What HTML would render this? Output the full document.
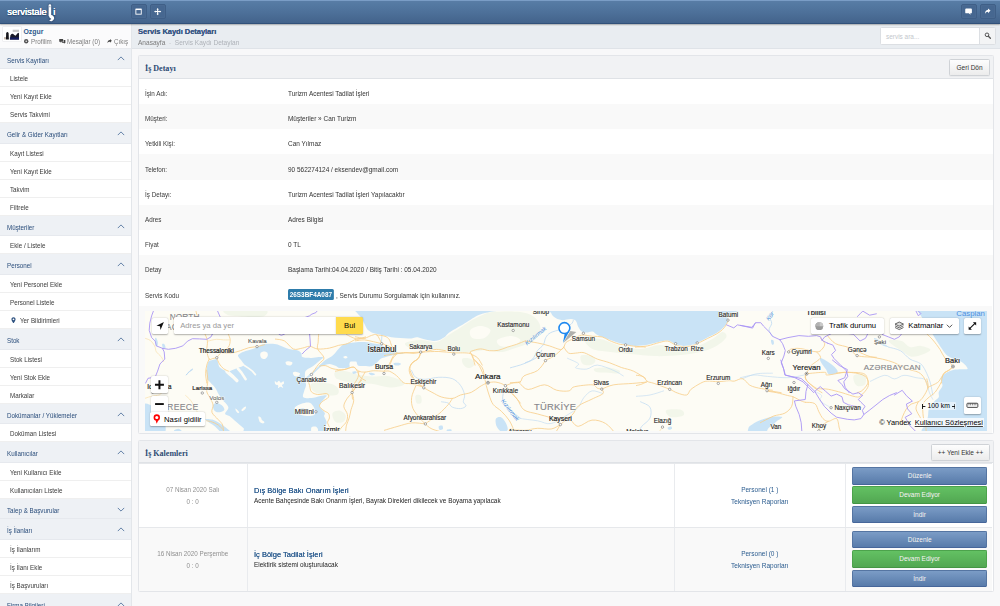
<!DOCTYPE html>
<html lang="tr">
<head>
<meta charset="utf-8">
<title>Servis Kaydı Detayları</title>
<style>
*{box-sizing:border-box;margin:0;padding:0}
html,body{width:1000px;height:606px;overflow:hidden;background:#f8f8f9;font-family:"Liberation Sans",Arial,sans-serif;color:#333;-webkit-text-size-adjust:none}
#app{position:relative;width:1000px;height:606px;overflow:hidden}
/* top bar */
#top{position:absolute;left:0;top:0;width:1000px;height:24px;z-index:5;box-shadow:0 .5px 1.2px rgba(0,0,0,.28);background:linear-gradient(#7a9dc6 0,#7a9dc6 1px,#587ca5 1.5px,#557aa3 15%,#4d7099 55%,#43638b 100%);border-bottom:1px solid #31517a}
#logo{position:absolute;left:7.3px;top:6.2px;font-size:9.45px;line-height:11px;color:#fff;white-space:nowrap;letter-spacing:-.05px;text-shadow:0 0 .5px #fff,0 0 .3px #fff,0 .5px 1.5px rgba(25,45,80,.9)}
.tb{position:absolute;top:3.5px;width:15.5px;height:15.5px;border-radius:2px;background:#466790;border:1px solid #3f5f87;box-shadow:inset 0 0 0 .5px rgba(255,255,255,.05)}
.tb svg{position:absolute;left:0;top:0;width:100%;height:100%}
/* sidebar */
#side{position:absolute;left:0;top:24px;width:131.5px;height:582px;background:#fff;border-right:1px solid #e3e6ea;overflow:hidden}
#user{height:24.6px;position:relative;background:#fbfbfc;border-bottom:1px solid #e8eaee}
#user .av{position:absolute;left:3px;top:3.2px;width:17.6px;height:14.2px;background:#fff;box-shadow:0 0 0 .5px #e4e4e6}
#user .nm{position:absolute;left:23.5px;top:3.8px;font-size:6.9px;font-weight:bold;color:#2f5b8d;line-height:8px}
#user .ln{position:absolute;top:13.6px;font-size:6.9px;line-height:8px;color:#7c7c7c;white-space:nowrap}
#user .ln span{display:inline-block;transform:scaleX(.906);transform-origin:0 50%}
.mh{height:20.5px;background:#eef1f5;border-bottom:1px solid #e6e9ee;position:relative;font-size:6.25px;color:#294c7a;padding-left:6.7px;line-height:23.4px;white-space:nowrap;overflow:hidden}
.mh .chev{position:absolute;right:5.5px;top:7.9px;width:8px;height:5px;fill:none;stroke:#6482a8;stroke-width:1.25}
.mi{height:18.05px;background:#fff;border-bottom:1px solid #efefef;font-size:6.25px;color:#3a3a3a;padding-left:9.7px;line-height:19.8px;overflow:hidden;white-space:nowrap;position:relative}
.mh span,.mi span{display:inline-block;font-size:6.9px;transform:scaleX(.906);transform-origin:0 50%}
.mi .pin{width:5px;height:6.6px;fill:#2b4f7e;vertical-align:-0.2px;margin-left:1.6px}
/* title bar */
#tbar{position:absolute;left:132px;top:24px;width:868px;height:25px;background:#e9edf1;border-bottom:1px solid #dfe3e8}
#tbar h1{position:absolute;left:6px;top:3px;font-size:7.55px;line-height:9px;font-weight:bold;color:#3a5986;white-space:nowrap;letter-spacing:-0.05px;text-shadow:0 0 .35px #3a5986}
#crumb{position:absolute;left:6px;top:15.2px;font-size:7px;line-height:8px;color:#7b7b7b;white-space:nowrap;transform:scaleX(.936);transform-origin:0 50%}
#crumb i{font-style:normal;color:#aeb2b8}
#crumb u{text-decoration:none;color:#c5c8cd}
#search{position:absolute;left:748.4px;top:3.3px;width:115.6px;height:18px;background:#fff;border:1px solid #dcdfe3;border-radius:1.5px}
#search .ph{position:absolute;left:4.6px;top:4.4px;font-size:6.45px;line-height:7px;color:#c3c7cc}
#search .bt{position:absolute;right:0;top:0;width:16px;height:16px;background:#f3f4f5;border-left:1px solid #dcdfe3}
/* panels */
.panel{position:absolute;left:138.45px;width:855.4px;background:#fff;border:1px solid #e3e5e9;border-radius:1.5px}
.ph1{height:22.3px;background:#f1f2f4;border-bottom:1px solid #dfe2e6;position:relative}
.ph1 b{position:absolute;left:5.6px;top:7.8px;font-family:"Liberation Serif","DejaVu Serif",serif;font-size:8.05px;line-height:9px;color:#2c4a73;font-weight:bold;white-space:nowrap}
.btn{position:absolute;background:linear-gradient(#fdfdfd,#ececec);border:1px solid #cfd2d6;border-radius:1.5px;font-size:6.5px;color:#333;text-align:center;white-space:nowrap;box-shadow:0 .5px .5px rgba(0,0,0,.06)}
.row{height:25.22px;position:relative;background:#fff;font-size:6.47px;color:#333;white-space:nowrap}
.row.alt{background:#f9f9f9}
.row .l{position:absolute;left:5.7px;top:2.2px;line-height:25.9px;font-size:6.8px;color:#3a3a3a;transform:scaleX(.927);transform-origin:0 50%}
.row .v{position:absolute;left:148.6px;top:2.2px;line-height:25.9px;font-size:6.9px;transform:scaleX(.936);transform-origin:0 50%}
.code{display:inline-block;background:#2e7cab;color:#fff;font-weight:bold;font-size:6.85px;line-height:11.6px;height:10.7px;padding:0 2.2px;border-radius:1.5px;vertical-align:0.4px;margin-left:-0.4px}
#mapwrap{position:absolute;left:5.15px;top:254.5px;width:842.6px;height:120.5px;overflow:hidden;background:#fdfcf5}
#mapwrap>svg{position:absolute;left:0;top:0}
.mc>svg{display:block}
.mc{position:absolute;background:#fff;border-radius:1.6px;box-shadow:0 .5px 1.5px rgba(0,0,0,.3);font-size:6.1px;color:#000;white-space:nowrap}
/* items */
.it{position:absolute;left:0;width:852.9px;height:63.9px;border-top:1px solid #e6e8eb;background:#fff}
.it.alt{background:#f9f9f9}
.it .c1{position:absolute;left:0;top:0;width:108.5px;height:100%;border-right:1px solid #e9ebee;text-align:center;font-size:6.8px;color:#909090}
.it .c1 div{transform:scaleX(.926)}
.it .c3 div{transform:scaleX(.93)}
.it .c2{position:absolute;left:108.5px;top:0;width:427px;height:100%;border-right:1px solid #e9ebee}
.it .c3{position:absolute;left:535.5px;top:0;width:170.6px;height:100%;border-right:1px solid #e9ebee;text-align:center;font-size:7px;color:#2b5c8f}
.it .tt{position:absolute;left:6.2px;top:21.7px;transform:scaleX(.9375);transform-origin:0 50%;font-size:8px;line-height:9px;color:#2b5c8f;white-space:nowrap;text-shadow:0 0 .2px #2b5c8f}
.it .ds{position:absolute;left:6.2px;top:32.8px;transform:scaleX(.932);transform-origin:0 50%;font-size:6.9px;line-height:8px;color:#222;white-space:nowrap}
.ab{position:absolute;left:712.5px;width:135.4px;height:17.6px;border-radius:1.5px;color:#fff;font-size:6.5px;line-height:16.6px;text-align:center;text-shadow:0 -.5px 0 rgba(0,0,0,.25)}
.ab.b{background:linear-gradient(#7b9cc6,#587baa);border:1px solid #5575a2;border-bottom-color:#46669a}
.ab.g{background:linear-gradient(#63c163,#52a752);border:1px solid #4ca34c;border-bottom-color:#449544}
</style>
</head>
<body>
<div id="app">
 <div id="top">
  <div id="logo">servistale<span style="display:inline-block;width:6.6px"></span>i</div>
  <svg style="position:absolute;left:46px;top:3px;width:10px;height:19px;overflow:visible;filter:drop-shadow(0 .5px .8px rgba(25,45,80,.9))" viewBox="0 0 10 19"><rect x="2.6" y="1.3" width="2.6" height="12.5" rx="1.3" fill="#fff"/><circle cx="3.9" cy="3.7" r=".6" fill="#7d96b8"/><path d="M3.9 12.2 a3 3 0 1 1 -1.2 5.2 l2.1 -1.3 l-2.3 -2 z" fill="#fff" transform="translate(.5 0)"/></svg>
  <div class="tb" style="left:131.3px"><svg viewBox="0 0 15 15"><rect x="4.3" y="4.6" width="6" height="5.6" fill="none" stroke="#fff" stroke-width="1"/><rect x="4.3" y="4.2" width="6" height="1.4" fill="#fff"/></svg></div>
  <div class="tb" style="left:150px"><svg viewBox="0 0 15 15"><path d="M7.4 4.4V10.2M4.5 7.3H10.3" stroke="#fff" stroke-width="1.2" fill="none"/><path d="M7.4 3.3 8.7 5H6.1zM7.4 11.3 8.7 9.6H6.1zM3.4 7.3 5.1 6V8.6zM11.4 7.3 9.7 6V8.6z" fill="#fff"/></svg></div>
  <div class="tb" style="left:961.3px"><svg viewBox="0 0 15 15"><path d="M3.6 4h6.4a1 1 0 0 1 1 1v3.2a1 1 0 0 1-1 1H9.2l.3 1.6-2-1.6H4.6a1 1 0 0 1-1-1V5a1 1 0 0 1 1-1z" fill="#fff"/></svg></div>
  <div class="tb" style="left:980px"><svg viewBox="0 0 15 15"><path d="M10.6 6.2 7.8 3.8v1.5C5.4 5.5 4.4 7.2 4.6 10c.6-1.6 1.5-2.4 3.2-2.4v1.5z" fill="#fff"/></svg></div>
 </div>

 <div id="side">
  <div id="user">
   <div class="av"><svg viewBox="3 27.2 17.6 14.2" width="17.6" height="14.2" style="display:block"><rect x="4" y="28.2" width="15.4" height="11.8" fill="#fff"/><rect x="12.7" y="29.9" width="6.3" height="2.2" fill="#c9c9c9"/><path d="M6.2 33.2 Q7.4 31 8.6 33.2 L8.9 39.6 H5.9z" fill="#15151a"/><path d="M9.9 39.8 L10.4 35.5 Q12.5 32.8 14 35 L15.5 36 L17.6 33.4 Q18.6 32.6 19 33.8 L19 39.8z" fill="#1a1a28"/><rect x="9.9" y="37.6" width="9.1" height="2.2" fill="#151c5e"/><rect x="4.2" y="37.3" width="1.6" height="2.3" fill="#b9a89a"/></svg></div>
   <div class="nm">Ozgur</div>
   <svg style="position:absolute;left:24.4px;top:15.4px" width="4.4" height="4.4" viewBox="0 0 8 8"><circle cx="4" cy="4" r="4" fill="#555"/><circle cx="4" cy="4" r="1.3" fill="#fbfbfc"/></svg>
   <div class="ln" style="left:31.4px"><span>Profilim</span></div>
   <svg style="position:absolute;left:59px;top:15.2px" width="6.6" height="5" viewBox="0 0 11 9"><path d="M0 0h7v5H3.5L2 6.6V5H0z M8 2h3v5H9.6v1.6L8 7H4.6V6H8z" fill="#444"/></svg>
   <div class="ln" style="left:67px"><span>Mesajlar (0)</span></div>
   <svg style="position:absolute;left:107px;top:15px" width="4.8" height="5" viewBox="0 0 9 9"><path d="M9 3 5.6 0v1.9C2.3 2 .6 4.2 1 8c.8-2.2 2.2-3 4.6-3v1.9z" fill="#444"/></svg>
   <div class="ln" style="left:113.8px"><span>Çıkış</span></div>
  </div>
<div class="mh"><span>Servis Kayıtları</span><svg class="chev" viewBox="0 0 10 6"><path d="M1 5 L5 1 L9 5" /></svg></div>
<div class="mi"><span>Listele</span></div>
<div class="mi"><span>Yeni Kayıt Ekle</span></div>
<div class="mi"><span>Servis Takvimi</span></div>
<div class="mh"><span>Gelir & Gider Kayıtları</span><svg class="chev" viewBox="0 0 10 6"><path d="M1 5 L5 1 L9 5" /></svg></div>
<div class="mi"><span>Kayıt Listesi</span></div>
<div class="mi"><span>Yeni Kayıt Ekle</span></div>
<div class="mi"><span>Takvim</span></div>
<div class="mi"><span>Filtrele</span></div>
<div class="mh"><span>Müşteriler</span><svg class="chev" viewBox="0 0 10 6"><path d="M1 5 L5 1 L9 5" /></svg></div>
<div class="mi"><span>Ekle / Listele</span></div>
<div class="mh"><span>Personel</span><svg class="chev" viewBox="0 0 10 6"><path d="M1 5 L5 1 L9 5" /></svg></div>
<div class="mi"><span>Yeni Personel Ekle</span></div>
<div class="mi"><span>Personel Listele</span></div>
<div class="mi"><svg class="pin" viewBox="0 0 10 14"><path d="M5 0.5C2.5 0.5 0.6 2.4 0.6 4.8 0.6 8 5 13.5 5 13.5S9.4 8 9.4 4.8C9.4 2.4 7.5 0.5 5 0.5Z M5 3a1.9 1.9 0 1 1 0 3.8A1.9 1.9 0 0 1 5 3Z" fill-rule="evenodd"/></svg><span style="margin-left:3.5px">Yer Bildirimleri</span></div>
<div class="mh"><span>Stok</span><svg class="chev" viewBox="0 0 10 6"><path d="M1 5 L5 1 L9 5" /></svg></div>
<div class="mi"><span>Stok Listesi</span></div>
<div class="mi"><span>Yeni Stok Ekle</span></div>
<div class="mi"><span>Markalar</span></div>
<div class="mh"><span>Dokümanlar / Yüklemeler</span><svg class="chev" viewBox="0 0 10 6"><path d="M1 5 L5 1 L9 5" /></svg></div>
<div class="mi"><span>Doküman Listesi</span></div>
<div class="mh"><span>Kullanıcılar</span><svg class="chev" viewBox="0 0 10 6"><path d="M1 5 L5 1 L9 5" /></svg></div>
<div class="mi"><span>Yeni Kullanıcı Ekle</span></div>
<div class="mi"><span>Kullanıcıları Listele</span></div>
<div class="mh"><span>Talep & Başvurular</span><svg class="chev" viewBox="0 0 10 6"><path d="M1 1 L5 5 L9 1" /></svg></div>
<div class="mh"><span>İş İlanları</span><svg class="chev" viewBox="0 0 10 6"><path d="M1 5 L5 1 L9 5" /></svg></div>
<div class="mi"><span>İş İlanlarım</span></div>
<div class="mi"><span>İş İlanı Ekle</span></div>
<div class="mi"><span>İş Başvuruları</span></div>
<div class="mh"><span>Firma Bilgileri</span><svg class="chev" viewBox="0 0 10 6"><path d="M1 5 L5 1 L9 5" /></svg></div>
 </div>

 <div id="tbar">
  <h1>Servis Kaydı Detayları</h1>
  <div id="crumb">Anasayfa <u>&nbsp;-&nbsp;</u> <i>Servis Kaydı Detayları</i></div>
  <div id="search"><div class="ph">servis ara...</div><div class="bt"><svg viewBox="0 0 16 16" width="16" height="16"><circle cx="7" cy="6.8" r="1.8" fill="none" stroke="#555" stroke-width="1"/><path d="M8.4 8.2 10.4 10.3" stroke="#555" stroke-width="1.3" stroke-linecap="round"/></svg></div></div>
 </div>

 <div class="panel" style="top:55.4px;height:378.5px">
  <div class="ph1"><b>İş Detayı</b><div class="btn" style="left:809.9px;top:2.7px;width:40.5px;height:16.6px;line-height:15px">Geri Dön</div></div>
<div class="row"><div class="l">İşin Adı:</div><div class="v">Turizm Acentesi Tadilat İşleri</div></div>
<div class="row alt"><div class="l">Müşteri:</div><div class="v">Müşteriler » Can Turizm</div></div>
<div class="row"><div class="l">Yetkili Kişi:</div><div class="v">Can Yılmaz</div></div>
<div class="row alt"><div class="l">Telefon:</div><div class="v">90 562274124 / eksendev@gmail.com</div></div>
<div class="row"><div class="l">İş Detayı:</div><div class="v">Turizm Acentesi Tadilat İşleri Yapılacaktır</div></div>
<div class="row alt"><div class="l">Adres</div><div class="v">Adres Bilgisi</div></div>
<div class="row"><div class="l">Fiyat</div><div class="v">0 TL</div></div>
<div class="row alt"><div class="l">Detay</div><div class="v">Başlama Tarihi:04.04.2020 / Bitiş Tarihi : 05.04.2020</div></div>
<div class="row"><div class="l">Servis Kodu</div><div class="v"><span class="code">26S3BF4A087</span> , Servis Durumu Sorgulamak için kullanınız.</div></div>
  
  <div style="position:absolute;left:0;top:249.3px;width:852.9px;height:127.2px;background:#f9f9f9"></div>
  <div id="mapwrap">
<svg width="842.6" height="120.5" viewBox="144.6 310.9 842.6 120.5" font-family="Liberation Sans, Arial, sans-serif">
<rect x="144" y="310" width="845" height="123" fill="#fdfcf5"/>
<path d="M225.6 309.8 C231.8 309.0 257.6 308.8 264.0 309.8 C270.4 310.8 266.0 314.6 264.0 315.8 C262.0 317.0 256.8 316.8 252.0 316.8 C247.2 316.8 239.4 316.2 235.2 315.8 C231.0 315.4 228.4 315.6 226.8 314.6 C225.2 313.6 219.4 310.6 225.6 309.8Z" fill="#f2f6ea"/>
<path d="M405 343 C406.7 341.7 414.8 340.2 420 340 C425.2 339.8 431.3 342.8 436 342 C440.7 341.2 444.3 337.2 448 335 C451.7 332.8 454.3 331.3 458 329 C461.7 326.7 466.0 323.3 470 321 C474.0 318.7 478.3 316.5 482 315 C485.7 313.5 485.7 312.5 492 312 C498.3 311.5 512.8 311.0 520 312 C527.2 313.0 531.7 315.0 535 318 C538.3 321.0 540.8 326.0 540 330 C539.2 334.0 534.2 339.0 530 342 C525.8 345.0 520.0 346.3 515 348 C510.0 349.7 504.8 351.7 500 352 C495.2 352.3 491.0 350.0 486 350 C481.0 350.0 475.0 351.7 470 352 C465.0 352.3 461.0 352.3 456 352 C451.0 351.7 445.2 350.5 440 350 C434.8 349.5 430.0 349.3 425 349 C420.0 348.7 413.3 349.0 410 348 C406.7 347.0 403.3 344.3 405 343Z" fill="#f2f6ea"/>
<path d="M470 330 C471.3 328.0 476.7 326.0 480 326 C483.3 326.0 489.3 328.0 490 330 C490.7 332.0 487.0 336.7 484 338 C481.0 339.3 474.3 339.3 472 338 C469.7 336.7 468.7 332.0 470 330Z" fill="#fdfcf5"/>
<path d="M497 340 C498.7 338.3 506.2 336.0 510 336 C513.8 336.0 519.7 338.3 520 340 C520.3 341.7 515.3 345.0 512 346 C508.7 347.0 502.5 347.0 500 346 C497.5 345.0 495.3 341.7 497 340Z" fill="#fdfcf5"/>
<path d="M585 340 C587.0 338.8 594.2 338.0 600 339 C605.8 340.0 613.3 344.3 620 346 C626.7 347.7 633.3 349.2 640 349 C646.7 348.8 653.3 345.0 660 345 C666.7 345.0 673.8 348.8 680 349 C686.2 349.2 691.7 347.7 697 346 C702.3 344.3 707.8 341.3 712 339 C716.2 336.7 719.7 332.3 722 332 C724.3 331.7 727.0 334.7 726 337 C725.0 339.3 720.3 343.5 716 346 C711.7 348.5 706.0 350.5 700 352 C694.0 353.5 687.5 354.3 680 355 C672.5 355.7 663.3 356.2 655 356 C646.7 355.8 637.5 354.7 630 354 C622.5 353.3 615.8 352.7 610 352 C604.2 351.3 598.7 351.0 595 350 C591.3 349.0 589.7 347.7 588 346 C586.3 344.3 583.0 341.2 585 340Z" fill="#f2f6ea"/>
<path d="M580.7 355.4 C582.3 354.1 589.2 355.2 591.6 356.1 C594.0 357.0 595.2 359.4 595.0 360.9 C594.8 362.4 592.4 364.6 590.2 365.0 C588.1 365.4 583.7 365.2 582.1 363.6 C580.5 362.0 579.1 356.6 580.7 355.4Z" fill="#f2f6ea"/>
<path d="M594.3 368.4 C596.3 367.7 603.8 367.1 607.9 367.4 C612.0 367.7 617.2 369.4 618.8 370.4 C620.4 371.4 619.7 373.1 617.4 373.4 C615.1 373.7 608.8 372.7 605.2 372.4 C601.6 372.1 597.5 372.5 595.7 371.8 C593.9 371.1 592.3 369.1 594.3 368.4Z" fill="#f2f6ea"/>
<path d="M311.0 383.6 C312.6 382.4 318.2 382.6 321.8 382.7 C325.4 382.8 329.9 383.4 332.6 384.5 C335.3 385.6 337.2 387.4 338.0 389.0 C338.8 390.6 338.6 393.3 337.1 394.4 C335.6 395.4 332.1 395.4 329.0 395.3 C325.9 395.2 321.1 394.4 318.2 393.5 C315.3 392.6 313.1 391.5 311.9 389.9 C310.7 388.2 309.4 384.8 311.0 383.6Z" fill="#f2f6ea"/>
<path d="M332.6 412.4 C333.8 411.2 337.7 410.2 339.8 410.6 C341.9 411.1 344.6 413.3 345.2 415.1 C345.8 416.9 344.9 420.2 343.4 421.4 C341.9 422.6 338.0 422.9 336.2 422.3 C334.4 421.7 333.2 419.5 332.6 417.8 C332.0 416.1 331.4 413.6 332.6 412.4Z" fill="#f2f6ea"/>
<path d="M335.0 372.0 C336.8 370.9 341.9 370.7 345.8 371.1 C349.7 371.6 353.9 373.8 358.4 374.7 C362.9 375.6 368.3 376.4 372.8 376.5 C377.3 376.6 381.2 375.2 385.4 375.6 C389.6 376.1 395.0 377.7 398.0 379.2 C401.0 380.7 404.9 383.2 403.4 384.6 C401.9 386.0 394.4 387.5 389.0 387.3 C383.6 387.1 377.0 384.4 371.0 383.7 C365.0 382.9 358.1 383.4 353.0 382.8 C347.9 382.2 343.4 381.0 340.4 380.1 C337.4 379.2 335.9 378.8 335.0 377.4 C334.1 376.0 333.2 373.1 335.0 372.0Z" fill="#f2f6ea"/>
<path d="M462.2 358.4 C463.6 357.5 469.1 357.9 471.0 359.0 C472.9 360.1 474.2 363.5 473.8 365.0 C473.4 366.5 470.1 368.1 468.3 368.0 C466.5 367.9 463.9 365.9 462.9 364.3 C461.9 362.7 460.8 359.3 462.2 358.4Z" fill="#f2f6ea"/>
<path d="M415.6 395.2 C416.5 394.6 419.5 394.5 420.4 395.7 C421.3 396.9 421.6 401.1 421.0 402.4 C420.4 403.7 417.6 403.9 416.6 403.3 C415.6 402.7 415.2 400.4 415.0 399.0 C414.8 397.6 414.7 395.8 415.6 395.2Z" fill="#f2f6ea"/>
<path d="M853.8 375.2 C855.5 374.0 862.1 373.3 864.0 374.7 C865.9 376.1 866.0 381.9 865.0 383.8 C864.0 385.7 859.8 386.4 857.9 386.1 C856.0 385.8 854.5 383.6 853.8 381.8 C853.1 380.0 852.1 376.4 853.8 375.2Z" fill="#f2f6ea"/>
<path d="M889.2 339.8 C891.0 339.4 897.8 339.8 901.2 341.0 C904.6 342.2 906.4 346.2 909.6 347.0 C912.8 347.8 917.0 345.4 920.4 345.8 C923.8 346.2 929.6 348.0 930.0 349.4 C930.4 350.8 926.0 353.0 922.8 354.2 C919.6 355.4 914.4 357.2 910.8 356.6 C907.2 356.0 904.6 352.8 901.2 350.6 C897.8 348.4 892.4 345.2 890.4 343.4 C888.4 341.6 887.4 340.2 889.2 339.8Z" fill="#f2f6ea"/>
<path d="M665.9 410.1 C667.7 408.9 678.1 408.9 680.9 409.8 C683.7 410.7 684.7 414.1 682.9 415.3 C681.1 416.5 672.8 417.8 670.0 416.9 C667.2 416.0 664.1 411.3 665.9 410.1Z" fill="#f2f6ea"/>
<path d="M215.7 359.1 C216.9 359.1 216.7 359.9 217.1 360.7 C217.5 361.5 217.6 362.9 218 364 C218.4 365.1 218.1 366.3 219.5 367.5 C220.9 368.7 224.4 370.9 226.5 371.3 C228.6 371.7 230.2 370.6 232 370 C233.8 369.4 235.4 368.7 237.3 367.9 C239.2 367.1 242.8 366.2 243.6 365.2 C244.3 364.1 242.7 362.9 241.8 361.6 C241.0 360.3 239.2 358.6 238.5 357.5 C237.8 356.4 237.2 355.9 237.8 355 C238.4 354.1 239.9 353.1 241.8 352.2 C243.7 351.3 246.5 350.7 249 349.9 C251.5 349.1 254.6 348.1 256.7 347.2 C258.8 346.3 259.9 345.1 261.6 344.5 C263.3 343.9 265.2 343.8 267 343.6 C268.8 343.5 270.9 343.5 272.4 343.6 C273.9 343.7 274.8 343.9 276 344.2 C277.2 344.5 277.4 344.5 279.5 345.3 C281.6 346.1 285.5 348.1 288.5 348.9 C291.5 349.7 295.4 349.6 297.5 350.3 C299.6 351.1 300.4 352.3 301.1 353.4 C301.9 354.5 300.4 356.2 302 357 C303.6 357.8 308.3 357.9 311 357.9 C313.7 357.9 316.2 357.1 318.2 357 C320.1 356.9 322.7 356.8 322.7 357.5 C322.7 358.2 319.8 360.1 318.2 361.5 C316.6 362.9 314.8 364.6 312.8 366 C310.9 367.4 307.9 368.6 306.5 369.6 C305.1 370.7 305.0 371.2 304.7 372.3 C304.4 373.4 304.5 374.7 304.5 376 C304.5 377.3 304.5 378.4 304.7 380 C304.9 381.6 305.8 383.6 305.6 385.4 C305.5 387.2 304.2 388.9 303.8 390.8 C303.4 392.8 301.7 395.9 302.9 397.1 C304.1 398.3 308.1 398.2 311 398 C313.9 397.8 317.4 396.2 320 395.8 C322.6 395.4 325.7 394.8 326.3 395.3 C326.9 395.8 324.7 397.5 323.6 398.9 C322.6 400.2 320.8 402.2 320 403.4 C319.2 404.6 318.8 405.1 319.1 406.1 C319.4 407.2 320.9 408.5 321.8 409.7 C322.7 410.9 324.2 412.2 324.5 413.3 C324.8 414.4 323.5 414.9 323.6 416 C323.8 417.1 324.9 418.4 325.4 419.6 C325.8 420.8 326.6 422.0 326.3 423.2 C326.0 424.4 324.4 425.2 323.6 426.8 C322.9 428.4 333.9 432.0 321.8 433 C309.7 434.0 264.1 433.8 251 433 C237.9 432.2 245.5 429.8 243 428 C240.5 426.2 238.3 424.0 236 422 C233.7 420.0 230.9 417.4 229 416 C227.1 414.6 225.0 414.8 224.7 413.8 C224.4 412.8 226.5 411.1 227 410 C227.5 408.9 228.2 408.1 227.9 407 C227.7 405.9 226.3 404.6 225.5 403.5 C224.7 402.4 224.1 402.2 222.9 400.7 C221.7 399.2 219.8 396.6 218.4 394.4 C217.0 392.1 216.1 389.4 214.4 387.2 C212.8 385.0 209.8 382.6 208.5 381 C207.2 379.4 207.1 379.7 206.7 377.8 C206.3 375.9 206.2 372.2 206.3 369.7 C206.5 367.1 207.0 364.0 207.6 362.5 C208.2 361.0 208.7 361.1 210 360.5 C211.3 359.9 214.5 359.1 215.7 359.1Z" fill="#c9e3f6"/>
<path d="M212.7 404.9 C213.2 403.7 215.3 402.7 216.9 402.9 C218.5 403.1 221.0 404.7 222.2 405.9 C223.3 407.1 224.5 409.1 223.8 410.1 C223.1 411.2 219.6 412.2 217.9 412.2 C216.2 412.2 214.6 411.3 213.7 410.1 C212.8 408.9 212.2 406.1 212.7 404.9Z" fill="#c9e3f6"/>
<path d="M205 419 C205.7 418.6 209.7 418.8 212 419.5 C214.3 420.2 216.7 421.6 219 423 C221.3 424.4 224.0 426.3 226 428 C228.0 429.7 231.7 432.2 231 433 C230.3 433.8 224.8 434.2 222 433 C219.2 431.8 216.3 427.8 214 426 C211.7 424.2 209.5 423.2 208 422 C206.5 420.8 204.3 419.4 205 419Z" fill="#c9e3f6"/>
<path d="M143 405.5 C144.5 401.0 149.2 405.4 152 405.8 C154.8 406.2 158.2 406.3 160 408 C161.8 409.7 162.3 411.8 163 416 C163.7 420.2 167.3 430.2 164 433 C160.7 435.8 146.5 437.6 143 433 C139.5 428.4 141.5 410.0 143 405.5Z" fill="#c9e3f6"/>
<path d="M174 430 C174.7 429.3 176.8 428.5 178 428.6 C179.2 428.7 180.5 429.8 181 430.5 C181.5 431.2 182.2 432.6 181 433 C179.8 433.4 175.2 433.5 174 433 C172.8 432.5 173.3 430.7 174 430Z" fill="#c9e3f6"/>
<path d="M320 364.7 C320.6 363.7 323.3 361.3 325.4 359.7 C327.5 358.1 330.1 357.4 332.6 355.2 C335.2 352.9 338.3 348.1 340.7 346.2 C343.1 344.2 344.4 344.2 347 343.5 C349.6 342.8 353.2 342.4 356 342.2 C358.8 341.9 361.2 341.8 364 342 C366.8 342.2 370.2 342.9 373 343.4 C375.8 343.9 378.8 343.9 381 344.8 C383.2 345.7 384.2 347.4 386 348.5 C387.8 349.6 389.1 350.7 392 351.5 C394.9 352.3 402.7 352.7 403.4 353.2 C404.1 353.7 398.6 353.9 396.2 354.4 C393.8 354.9 390.8 355.6 389 356 C387.2 356.4 386.9 356.5 385.4 357 C383.9 357.5 381.4 358.0 380 358.8 C378.6 359.6 378.2 360.8 377.3 361.7 C376.4 362.6 375.7 363.2 374.6 364 C373.6 364.8 373.1 365.9 371 366.2 C368.9 366.5 364.2 366.0 362 365.9 C359.8 365.8 358.5 365.9 357.5 365.3 C356.5 364.7 356.6 362.6 356.2 362 C355.8 361.4 355.8 361.6 354.8 361.5 C353.8 361.4 351.3 361.1 350.3 361.5 C349.3 361.9 349.3 363.0 349 364 C348.7 365.0 350.1 366.8 348.5 367.5 C346.9 368.2 341.8 368.3 339.5 368 C337.2 367.7 336.8 366.4 335 365.7 C333.2 365.0 331.2 363.8 329 363.8 C326.8 363.8 323.5 365.5 322 365.6 C320.5 365.8 319.4 365.7 320 364.7Z" fill="#c9e3f6"/>
<path d="M321 364.8 L311 374.2 L305.5 378.5" fill="none" stroke="#c9e3f6" stroke-width="1.8" stroke-linecap="round"/>
<path d="M381.5 335.2 L381 344.5" fill="none" stroke="#c9e3f6" stroke-width="1" stroke-linecap="round"/>
<path d="M354 309 C376.8 308.6 469.5 308.5 492 309 C514.5 309.5 490.7 311.2 489 312 C487.3 312.8 484.4 312.8 481.8 313.7 C479.2 314.6 476.2 315.9 473.7 317.3 C471.1 318.7 469.2 320.2 466.5 321.8 C463.8 323.4 460.5 325.4 457.5 327.2 C454.5 329.0 450.8 331.0 448.5 332.6 C446.2 334.2 446.1 335.8 444 337.1 C441.9 338.5 438.8 340.2 436 340.7 C433.2 341.1 429.7 340.2 427 339.8 C424.3 339.4 421.6 338.4 419.8 338 C418.0 337.6 418.0 337.0 416.2 337.1 C414.4 337.2 411.7 338.4 409 338.5 C406.3 338.6 403.0 338.2 400 338 C397.0 337.8 394.0 337.6 391 337.1 C388.0 336.6 385.1 335.8 382 335.1 C378.9 334.4 374.9 333.7 372.7 333 C370.5 332.3 370.1 331.8 369 331 C367.9 330.2 367.1 329.5 366.2 328.1 C365.3 326.8 364.5 324.6 363.6 322.9 C362.7 321.2 361.9 319.1 361 317.7 C360.1 316.3 359.0 315.6 358 314.5 C357.0 313.4 355.9 312.1 355.2 311.2 C354.5 310.3 331.2 309.4 354 309Z" fill="#c9e3f6"/>
<path d="M549 309 C578.3 308.5 696.5 308.1 726 309 C755.5 309.9 726.0 312.7 726.2 314.6 C726.4 316.5 727.8 318.6 727.4 320.6 C727.0 322.6 725.6 324.6 723.8 326.6 C722.0 328.6 719.4 330.8 716.6 332.6 C713.8 334.4 710.3 335.7 707 337.4 C703.7 339.1 699.4 341.6 696.8 342.8 C694.2 344.0 693.7 344.1 691.4 344.6 C689.1 345.1 685.7 345.9 683 345.8 C680.3 345.7 677.8 344.9 675.2 344 C672.6 343.1 670.1 340.8 667.4 340.4 C664.7 340.0 662.4 340.9 659 341.6 C655.6 342.3 651.0 343.9 647 344.6 C643.0 345.3 638.6 345.8 635 345.8 C631.4 345.8 628.3 345.0 625.2 344.4 C622.1 343.8 619.3 343.2 616.2 342.2 C613.1 341.2 609.8 339.8 606.6 338.6 C603.4 337.4 599.4 336.2 597 335 C594.6 333.8 594.0 331.8 592.2 331.4 C590.4 331.0 587.8 332.5 586 332.5 C584.2 332.5 582.8 332.4 581.4 331.4 C580.0 330.4 578.8 328.4 577.8 326.6 C576.8 324.8 576.6 321.9 575.4 320.6 C574.2 319.3 573.0 318.9 570.6 318.8 C568.2 318.7 563.8 320.3 561 320 C558.2 319.7 555.6 318.3 553.8 317 C552.0 315.7 551.0 313.5 550.2 312.2 C549.4 310.9 519.7 309.5 549 309Z" fill="#c9e3f6"/>
<path d="M916 309 C928.0 308.5 977.7 288.3 990 309 C1002.3 329.7 1000.7 412.3 990 433 C979.3 453.7 936.4 434.6 925.8 433 C915.2 431.4 926.1 426.0 926.4 423.2 C926.7 420.4 927.2 418.6 927.6 416 C928.0 413.4 927.6 410.2 928.8 407.6 C930.0 405.0 933.2 402.2 934.8 400.4 C936.4 398.6 937.8 398.2 938.4 396.8 C939.0 395.4 937.8 393.8 938.4 392 C939.0 390.2 941.6 388.0 942 386 C942.4 384.0 940.9 381.6 940.8 380 C940.7 378.4 940.4 377.8 941.4 376.5 C942.4 375.2 944.9 373.3 946.8 372.2 C948.7 371.1 950.4 370.3 952.8 369.8 C955.2 369.3 958.8 369.4 961.2 369.2 C963.6 369.0 967.0 369.7 967.2 368.6 C967.4 367.5 964.6 364.2 962.4 362.6 C960.2 361.0 956.6 360.2 954 359 C951.4 357.8 948.8 357.0 946.8 355.4 C944.8 353.8 943.6 351.6 942 349.4 C940.4 347.2 938.8 344.7 937.2 342.2 C935.6 339.7 934.3 337.4 932.4 334.4 C930.5 331.4 928.4 327.7 926 324 C923.6 320.3 919.7 314.7 918 312.2 C916.3 309.7 904.0 309.5 916 309Z" fill="#c9e3f6"/>
<path d="M750.2 425.5 C751.9 424.2 755.7 421.9 758.4 420.7 C761.1 419.4 764.0 418.7 766.6 418 C769.2 417.3 771.5 416.6 774 416.5 C776.5 416.4 781.4 416.3 781.8 417.1 C782.2 417.9 777.7 420.1 776.3 421.2 C774.9 422.3 775.0 422.8 773.6 423.9 C772.2 425.0 769.8 426.5 768.2 428 C766.6 429.5 767.2 432.2 764 433 C760.8 433.8 751.7 433.8 749 433 C746.3 432.2 747.8 429.8 748 428.5 C748.2 427.2 748.5 426.8 750.2 425.5Z" fill="#c9e3f6"/>
<path d="M820.2 357.9 C821.2 358.0 823.7 359.4 825.7 360.6 C827.8 361.9 830.6 363.7 832.5 365.4 C834.4 367.1 836.8 369.4 837.2 370.8 C837.7 372.2 836.7 373.0 835.2 373.6 C833.7 374.2 830.0 374.9 828.4 374.2 C826.8 373.5 826.8 371.2 825.7 369.5 C824.6 367.8 822.6 365.6 821.6 364 C820.6 362.4 819.8 361.0 819.6 360 C819.4 359.0 819.2 357.8 820.2 357.9Z" fill="#c9e3f6"/>
<path d="M495.5 418.7 C496.3 417.2 499.3 416.5 501.0 417.3 C502.7 418.1 504.7 421.2 505.7 423.4 C506.7 425.5 507.9 428.8 507.1 430.2 C506.3 431.6 502.8 432.3 501.0 431.6 C499.2 430.9 497.1 428.4 496.2 426.2 C495.3 424.0 494.7 420.2 495.5 418.7Z" fill="#c9e3f6"/>
<path d="M393.5 363.0 C394.2 362.6 396.8 362.5 398.0 362.6 C399.2 362.8 400.7 363.4 400.7 363.9 C400.7 364.3 399.1 365.1 398.0 365.3 C396.9 365.5 394.8 365.2 394.0 364.8 C393.2 364.4 392.8 363.4 393.5 363.0Z" fill="#c9e3f6"/>
<path d="M368.3 373.1 C368.4 372.7 370.8 372.7 371.9 372.9 C372.9 373.1 374.8 373.9 374.6 374.3 C374.5 374.7 372.1 375.4 371.0 375.2 C369.9 375.0 368.2 373.5 368.3 373.1Z" fill="#c9e3f6"/>
<path d="M352.1 371.6 C352.5 371.2 354.6 370.9 355.3 371.1 C356.0 371.3 356.6 372.4 356.2 372.9 C355.8 373.3 353.7 374.0 353.0 373.8 C352.3 373.6 351.7 372.1 352.1 371.6Z" fill="#c9e3f6"/>
<path d="M438.4 426.2 C438.8 425.5 441.1 425.1 441.8 425.5 C442.5 425.9 442.9 428.2 442.5 428.9 C442.1 429.6 439.8 430.1 439.1 429.6 C438.4 429.2 437.9 426.9 438.4 426.2Z" fill="#c9e3f6"/>
<path d="M446.6 429.6 C447.2 429.2 449.9 428.9 450.6 429.2 C451.3 429.5 451.5 431.2 450.9 431.6 C450.3 432.0 447.5 431.9 446.8 431.6 C446.1 431.3 446.0 430.0 446.6 429.6Z" fill="#c9e3f6"/>
<path d="M154.6 338.4 C154.8 337.7 155.5 337.5 156.0 338.1 C156.5 338.7 157.2 340.9 157.4 342.2 C157.6 343.5 157.3 345.2 157.0 345.8 C156.7 346.4 155.9 346.4 155.5 345.8 C155.1 345.2 155.0 343.4 154.8 342.2 C154.7 341.0 154.4 339.1 154.6 338.4Z" fill="#c9e3f6"/>
<path d="M161.8 344.0 C162.1 343.6 163.2 343.4 163.8 344.0 C164.4 344.6 165.2 346.9 165.1 347.6 C165.0 348.3 163.7 348.6 163.2 348.4 C162.7 348.2 162.2 347.1 162.0 346.4 C161.8 345.7 161.5 344.4 161.8 344.0Z" fill="#c9e3f6"/>
<path d="M770.6 340.2 C770.8 339.5 772.4 339.6 772.9 340.2 C773.4 340.8 773.7 342.9 773.5 343.6 C773.3 344.3 772.1 345.1 771.6 344.5 C771.1 343.9 770.4 340.9 770.6 340.2Z" fill="#c9e3f6"/>
<path d="M873.6 338.0 C874.0 337.7 876.6 338.8 878.4 339.8 C880.2 340.8 882.8 342.8 884.4 344.0 C886.0 345.2 888.4 346.8 888.0 347.0 C887.6 347.2 884.0 346.1 882.0 345.2 C880.0 344.3 877.4 342.8 876.0 341.6 C874.6 340.4 873.2 338.3 873.6 338.0Z" fill="#c9e3f6"/>
<path d="M667.3 427.5 C667.7 427.0 670.0 426.2 670.7 426.4 C671.4 426.6 672.0 428.1 671.6 428.6 C671.2 429.1 669.1 429.8 668.4 429.6 C667.7 429.4 666.9 428.0 667.3 427.5Z" fill="#c9e3f6"/>
<path d="M260.5 352.5 C261.1 351.9 262.4 351.3 263.5 351.3 C264.6 351.3 266.2 351.7 266.8 352.5 C267.4 353.3 267.7 354.9 267.3 356 C266.9 357.1 265.6 358.5 264.5 358.8 C263.4 359.1 261.8 358.4 261 357.8 C260.2 357.2 259.9 355.9 259.8 355 C259.7 354.1 259.9 353.1 260.5 352.5Z" fill="#fdfcf5"/>
<path d="M274.5 381 C274.8 380.7 275.8 382.5 276.5 382.4 C277.2 382.3 277.8 380.6 278.5 380.6 C279.2 380.6 279.8 382.5 280.5 382.6 C281.2 382.7 282.5 381.0 283 381.2 C283.5 381.4 283.8 383.0 283.5 383.6 C283.2 384.2 281.6 384.3 281.5 385 C281.4 385.7 283.1 387.3 282.8 387.6 C282.6 387.9 280.9 386.5 280 386.6 C279.1 386.7 278.0 388.2 277.6 388 C277.2 387.8 278.2 386.0 277.8 385.4 C277.4 384.8 275.6 384.9 275 384.2 C274.4 383.5 274.2 381.3 274.5 381Z" fill="#fdfcf5"/>
<path d="M285.2 362 C285.5 361.4 287.4 361.1 288.5 361.2 C289.6 361.3 291.7 361.8 292 362.5 C292.3 363.2 291.4 364.8 290.5 365.2 C289.6 365.6 287.4 365.5 286.5 365 C285.6 364.5 284.9 362.6 285.2 362Z" fill="#fdfcf5"/>
<path d="M292.5 372.5 C292.8 371.8 294.8 371.7 296 371.8 C297.2 371.9 299.3 372.5 299.6 373.2 C299.9 373.9 298.9 375.5 298 376 C297.1 376.5 294.9 376.6 294 376 C293.1 375.4 292.2 373.2 292.5 372.5Z" fill="#fdfcf5"/>
<path d="M294.8 407 C295.8 405.9 298.7 404.4 301 403.6 C303.3 402.9 306.5 402.1 308.5 402.5 C310.5 402.9 311.8 404.5 312.8 406 C313.8 407.5 314.5 410.0 314.6 411.5 C314.8 413.0 315.1 414.2 313.7 415 C312.3 415.8 308.9 416.1 306.5 416 C304.1 415.9 301.2 415.1 299.3 414.2 C297.4 413.3 295.8 411.7 295 410.5 C294.2 409.3 293.8 408.1 294.8 407Z" fill="#fdfcf5"/>
<path d="M299.5 409 C299.8 408.5 302.2 407.9 303 408.2 C303.8 408.4 304.8 410.0 304.5 410.5 C304.2 411.0 301.8 411.4 301 411.2 C300.2 410.9 299.2 409.5 299.5 409Z" fill="#c9e3f6"/>
<path d="M226.5 371.3 L229 373.5 L232.5 376.5 L236.5 380.5" fill="none" stroke="#fdfcf5" stroke-width="3.4" stroke-linecap="round" stroke-linejoin="round"/>
<path d="M237.5 368.5 L241 372.5 L245.2 379" fill="none" stroke="#fdfcf5" stroke-width="2.6" stroke-linecap="round" stroke-linejoin="round"/>
<path d="M243.6 365.2 L248 368 L252 371 L255 374.5" fill="none" stroke="#fdfcf5" stroke-width="1.7" stroke-linecap="round" stroke-linejoin="round"/>
<path d="M235 408.5 C235.2 408.3 236.4 409.4 237 410 C237.6 410.6 238.7 411.7 238.8 412.2 C238.9 412.7 238.0 413.2 237.5 413 C237.0 412.8 236.0 411.8 235.6 411 C235.2 410.2 234.8 408.7 235 408.5Z" fill="#fdfcf5"/>
<path d="M241 410 C241.2 409.3 243.2 407.6 244 407 C244.8 406.4 245.3 406.2 245.5 406.5 C245.7 406.8 245.7 407.8 245.2 408.5 C244.7 409.2 243.2 410.8 242.5 411 C241.8 411.2 240.8 410.7 241 410Z" fill="#fdfcf5"/>
<path d="M258 416.5 C258.3 416.2 259.9 416.9 260.5 417.5 C261.1 418.1 260.9 419.2 261.5 420 C262.1 420.8 263.8 421.4 264 422 C264.2 422.6 263.2 423.5 262.5 423.5 C261.8 423.5 260.2 422.7 259.5 422 C258.8 421.3 258.8 420.4 258.5 419.5 C258.2 418.6 257.7 416.8 258 416.5Z" fill="#fdfcf5"/>
<path d="M311 427.5 C311.6 426.4 313.9 426.2 315 426.5 C316.1 426.8 317.2 427.9 317.5 429 C317.8 430.1 317.5 432.3 316.5 433 C315.5 433.7 312.4 433.9 311.5 433 C310.6 432.1 310.4 428.6 311 427.5Z" fill="#fdfcf5"/>
<path d="M343.2 356.5 C343.5 356.1 344.8 355.7 345.5 355.8 C346.2 355.9 347.2 356.8 347.2 357.2 C347.2 357.6 346.1 358.2 345.5 358.3 C344.9 358.4 343.9 358.3 343.5 358 C343.1 357.7 342.9 356.9 343.2 356.5Z" fill="#fdfcf5"/>
<path d="M411.2 370.4 C411.9 371.5 413.0 375.7 415.3 377.2 C417.6 378.7 421.0 379.2 424.8 379.2 C428.6 379.2 433.9 377.3 438.4 377.2 C442.9 377.1 448.4 377.2 452.0 378.6 C455.6 380.0 458.2 382.7 460.2 385.4 C462.2 388.1 463.8 392.2 464.2 394.9 C464.6 397.6 462.7 399.9 462.9 401.7 C463.1 403.5 466.1 404.7 465.6 405.8 C465.2 406.9 462.5 408.3 460.2 408.5 C457.9 408.7 454.1 408.0 452.0 407.1 C449.9 406.2 449.7 403.9 447.9 403.0 C446.1 402.1 442.2 401.9 441.1 401.7" fill="none" stroke="#bcd9f2" stroke-width="0.7" stroke-linecap="round" stroke-linejoin="round"/>
<path d="M525.0 362.6 C526.2 362.0 530.2 361.0 532.2 359.0 C534.2 357.0 535.2 353.0 537.0 350.6 C538.8 348.2 541.6 346.8 543.0 344.6 C544.4 342.4 544.2 339.4 545.4 337.4 C546.6 335.4 547.6 334.0 550.2 332.6 C552.8 331.2 557.6 330.4 561.0 329.0 C564.4 327.6 568.6 325.7 570.6 324.2 C572.6 322.7 572.6 320.7 573.0 320.0" fill="none" stroke="#bcd9f2" stroke-width="0.8" stroke-linecap="round" stroke-linejoin="round"/>
<path d="M510.0 367.7 C512.3 367.0 519.1 365.4 523.6 363.6 C528.1 361.8 534.2 359.1 537.2 356.8 C540.2 354.5 540.6 351.1 541.3 350.0" fill="none" stroke="#bcd9f2" stroke-width="0.8" stroke-linecap="round" stroke-linejoin="round"/>
<path d="M503.7 389.4 C503.5 391.0 501.9 396.1 502.3 399.0 C502.8 401.9 504.3 404.6 506.4 407.1 C508.4 409.6 512.3 412.1 514.6 413.9 C516.9 415.7 519.1 417.3 520.0 418.0" fill="none" stroke="#bcd9f2" stroke-width="0.8" stroke-linecap="round" stroke-linejoin="round"/>
<path d="M510.0 413.9 C511.4 414.6 513.7 416.9 518.2 418.0 C522.7 419.1 531.8 419.8 537.2 420.7 C542.6 421.6 545.6 424.5 550.8 423.4 C556.0 422.3 564.0 416.6 568.5 413.9 C573.0 411.2 575.5 409.8 578.0 407.1 C580.5 404.4 581.1 400.3 583.4 397.6 C585.7 394.9 588.4 391.5 591.6 390.8 C594.8 390.1 600.7 393.1 602.5 393.5" fill="none" stroke="#bcd9f2" stroke-width="0.6" stroke-linecap="round" stroke-linejoin="round"/>
<path d="M567.1 358.2 C568.9 359.1 576.6 362.0 578.0 363.6 C579.4 365.2 573.9 366.8 575.3 367.7 C576.7 368.6 582.6 369.4 586.2 369.0 C589.8 368.6 592.5 364.8 597.0 365.0 C601.5 365.2 609.1 368.6 613.4 370.4 C617.7 372.2 621.3 374.9 622.9 375.8" fill="none" stroke="#bcd9f2" stroke-width="0.6" stroke-linecap="round" stroke-linejoin="round"/>
<path d="M636.0 396.2 C638.3 396.0 645.1 395.8 649.6 394.9 C654.1 394.0 660.9 391.5 663.2 390.8" fill="none" stroke="#bcd9f2" stroke-width="0.6" stroke-linecap="round" stroke-linejoin="round"/>
<path d="M640.1 401.7 C641.7 402.6 648.0 404.4 649.6 407.1 C651.2 409.8 651.0 414.8 649.6 418.0 C648.2 421.2 643.2 423.9 641.4 426.2 C639.6 428.5 639.2 430.7 638.7 431.6" fill="none" stroke="#bcd9f2" stroke-width="0.7" stroke-linecap="round" stroke-linejoin="round"/>
<path d="M772.6 311.0 C772.0 311.9 769.4 314.4 769.2 316.4 C769.0 318.4 771.4 320.9 771.3 323.2 C771.2 325.5 768.4 327.8 768.6 330.0 C768.8 332.2 771.9 335.2 772.6 336.2" fill="none" stroke="#bcd9f2" stroke-width="0.8" stroke-linecap="round" stroke-linejoin="round"/>
<path d="M740.0 377.6 C742.3 377.2 749.1 375.1 753.6 374.9 C758.1 374.7 761.5 375.9 767.2 376.3 C772.9 376.8 781.5 377.8 787.6 377.6 C793.7 377.4 801.2 375.3 803.9 374.9" fill="none" stroke="#bcd9f2" stroke-width="0.6" stroke-linecap="round" stroke-linejoin="round"/>
<path d="M742.1 378.6 C744.4 377.8 750.7 374.7 755.7 373.8 C760.7 372.9 769.3 373.2 772.0 373.1" fill="none" stroke="#bcd9f2" stroke-width="0.6" stroke-linecap="round" stroke-linejoin="round"/>
<path d="M888.0 347.0 C890.0 347.6 896.4 348.6 900.0 350.6 C903.6 352.6 906.2 356.8 909.6 359.0 C913.0 361.2 917.6 361.4 920.4 363.8 C923.2 366.2 924.8 370.2 926.4 373.4 C928.0 376.6 929.0 379.4 930.0 383.0 C931.0 386.6 932.0 393.0 932.4 395.0" fill="none" stroke="#bcd9f2" stroke-width="0.7" stroke-linecap="round" stroke-linejoin="round"/>
<path d="M870.0 381.2 C872.4 380.2 880.4 375.6 884.4 375.2 C888.4 374.8 890.8 378.8 894.0 378.8 C897.2 378.8 900.0 375.4 903.6 375.2 C907.2 375.0 912.0 376.8 915.6 377.6 C919.2 378.4 923.0 377.6 925.2 380.0 C927.4 382.4 927.6 388.8 928.8 392.0 C930.0 395.2 931.8 398.0 932.4 399.2" fill="none" stroke="#bcd9f2" stroke-width="0.6" stroke-linecap="round" stroke-linejoin="round"/>
<path d="M814.4 391.3 C815.5 392.0 820.3 393.8 821.2 395.4 C822.1 397.0 818.2 398.8 819.8 400.8 C821.4 402.8 828.9 406.5 830.7 407.6" fill="none" stroke="#bcd9f2" stroke-width="0.5" stroke-linecap="round" stroke-linejoin="round"/>
<path d="M186.0 374.6 C186.5 374.1 188.0 372.4 189.0 371.6 C190.0 370.8 191.5 369.9 192.0 369.6" fill="none" stroke="#bcd9f2" stroke-width="1.0" stroke-linecap="round" stroke-linejoin="round"/>
<path d="M185.9 374.9 C186.5 374.2 188.3 371.9 189.3 370.9 C190.3 369.9 191.5 369.2 191.9 368.9" fill="none" stroke="#bcd9f2" stroke-width="0.8" stroke-linecap="round" stroke-linejoin="round"/>
<path d="M216.4 357.6 C215.7 357.7 213.7 358.2 212.4 358.4 C211.1 358.6 209.8 360.3 208.8 359.0 C207.8 357.7 206.7 353.6 206.4 350.6 C206.1 347.6 207.4 344.0 207.0 341.0 C206.6 338.0 205.1 335.2 204.0 332.6 C202.9 330.0 201.6 328.2 200.4 325.4 C199.2 322.6 197.6 318.2 196.8 315.8 C196.0 313.4 195.8 311.8 195.6 311.0" fill="none" stroke="#f8d08e" stroke-width="0.85" stroke-linecap="round" stroke-linejoin="round"/>
<path d="M216.4 357.6 C217.1 356.7 218.9 354.2 220.8 352.4 C222.7 350.6 226.5 349.1 228.0 347.0 C229.5 344.9 229.8 341.9 229.8 339.8 C229.8 337.7 228.3 335.3 228.0 334.4" fill="none" stroke="#f8d08e" stroke-width="0.85" stroke-linecap="round" stroke-linejoin="round"/>
<path d="M220.8 352.4 C222.4 352.5 227.2 353.3 230.4 353.0 C233.6 352.7 237.0 351.5 240.0 350.6 C243.0 349.7 245.6 348.3 248.4 347.6 C251.2 346.9 254.0 347.0 256.6 346.5 C259.2 346.0 262.8 344.9 264.0 344.6" fill="none" stroke="#f8d08e" stroke-width="0.85" stroke-linecap="round" stroke-linejoin="round"/>
<path d="M216.4 358.0 C216.8 359.0 217.9 362.0 219.0 363.8 C220.1 365.6 221.7 367.4 223.2 368.6 C224.7 369.8 227.2 370.6 228.0 371.0" fill="none" stroke="#f8d08e" stroke-width="0.85" stroke-linecap="round" stroke-linejoin="round"/>
<path d="M208.8 359.0 C208.4 360.0 207.0 362.6 206.4 365.0 C205.8 367.4 205.2 370.4 205.2 373.4 C205.2 376.4 206.2 381.4 206.4 383.0" fill="none" stroke="#f8d08e" stroke-width="0.85" stroke-linecap="round" stroke-linejoin="round"/>
<path d="M144.0 338.0 C145.0 338.4 148.3 339.1 150.0 340.4 C151.7 341.7 153.2 343.9 154.2 345.8 C155.2 347.7 154.9 350.0 156.0 351.8 C157.1 353.6 159.6 355.0 160.8 356.6 C162.0 358.2 162.8 360.6 163.2 361.4" fill="none" stroke="#fae3b5" stroke-width="0.8" stroke-linecap="round" stroke-linejoin="round"/>
<path d="M207.6 341.0 C209.0 340.7 213.4 339.4 216.0 339.2 C218.6 339.0 220.9 339.7 223.2 339.8 C225.5 339.9 228.7 339.8 229.8 339.8" fill="none" stroke="#fae3b5" stroke-width="0.8" stroke-linecap="round" stroke-linejoin="round"/>
<path d="M206.3 370.0 C206.5 371.8 207.4 377.1 207.4 380.6 C207.4 384.1 206.0 388.3 206.3 391.1 C206.7 393.9 208.4 395.2 209.5 397.5 C210.6 399.8 212.3 402.4 212.7 404.9 C213.0 407.4 210.7 409.9 211.6 412.3 C212.5 414.8 216.1 417.5 217.9 419.6 C219.7 421.7 221.3 422.6 222.2 424.9 C223.1 427.2 223.0 432.0 223.2 433.4" fill="none" stroke="#f8d08e" stroke-width="0.85" stroke-linecap="round" stroke-linejoin="round"/>
<path d="M144.0 398.5 C145.1 398.1 147.8 397.0 150.3 396.4 C152.8 395.8 157.0 395.4 158.8 394.8 C160.6 394.2 160.6 393.1 160.9 392.7" fill="none" stroke="#fae3b5" stroke-width="0.8" stroke-linecap="round" stroke-linejoin="round"/>
<path d="M185.2 395.4 C186.1 396.3 188.7 398.2 190.5 400.6 C192.3 403.1 194.4 407.8 195.8 410.1 C197.2 412.4 198.4 413.7 198.9 414.4" fill="none" stroke="#fae3b5" stroke-width="0.8" stroke-linecap="round" stroke-linejoin="round"/>
<path d="M206.3 420.7 C207.2 420.9 209.7 421.1 211.6 421.8 C213.5 422.5 216.1 423.7 217.9 424.9 C219.7 426.1 221.5 428.5 222.2 429.2" fill="none" stroke="#f8d08e" stroke-width="0.85" stroke-linecap="round" stroke-linejoin="round"/>
<path d="M275.0 339.0 C276.5 339.3 281.0 339.2 284.0 340.8 C287.0 342.4 290.0 347.7 293.0 348.9 C296.0 350.1 299.3 348.4 302.0 348.0 C304.7 347.6 306.6 346.1 309.2 346.2 C311.8 346.3 314.0 348.6 317.3 348.9 C320.6 349.2 325.6 348.6 329.0 348.0 C332.4 347.4 335.0 346.1 338.0 345.3 C341.0 344.6 344.0 344.6 347.0 343.5 C350.0 342.4 353.0 339.9 356.0 339.0 C359.0 338.1 363.5 338.2 365.0 338.1" fill="none" stroke="#f8d08e" stroke-width="0.85" stroke-linecap="round" stroke-linejoin="round"/>
<path d="M318.2 334.5 C318.1 335.7 317.9 339.3 317.8 341.7 C317.7 344.1 316.3 346.2 317.3 348.9 C318.3 351.6 323.5 355.3 323.6 357.9 C323.8 360.4 320.3 361.5 318.2 364.2 C316.1 366.9 312.2 372.5 311.0 374.1" fill="none" stroke="#f8d08e" stroke-width="0.85" stroke-linecap="round" stroke-linejoin="round"/>
<path d="M346.1 334.5 C347.0 334.9 349.6 336.4 351.5 337.2 C353.4 337.9 355.6 339.1 357.8 339.0 C360.1 338.9 363.8 337.2 365.0 336.8" fill="none" stroke="#f8d08e" stroke-width="0.85" stroke-linecap="round" stroke-linejoin="round"/>
<path d="M319.1 366.0 C320.2 365.9 323.1 365.2 325.4 365.6 C327.6 366.1 329.6 368.0 332.6 368.7 C335.6 369.4 340.1 369.9 343.4 369.6 C346.7 369.3 350.3 366.9 352.4 366.9 C354.5 366.9 354.8 368.0 356.0 369.6 C357.2 371.2 358.1 375.0 359.6 376.8 C361.1 378.6 364.1 379.8 365.0 380.4" fill="none" stroke="#f8d08e" stroke-width="0.85" stroke-linecap="round" stroke-linejoin="round"/>
<path d="M355.0 336.7 C356.5 336.9 361.3 338.2 364.0 338.0 C366.7 337.8 369.1 335.8 371.2 335.3 C373.3 334.8 374.9 333.5 376.6 334.9 C378.3 336.3 380.5 342.2 381.3 343.6" fill="none" stroke="#f8d08e" stroke-width="0.85" stroke-linecap="round" stroke-linejoin="round"/>
<path d="M355.0 340.7 C356.5 340.6 361.0 339.6 364.0 339.8 C367.0 340.0 370.1 341.0 373.0 341.6 C375.9 342.2 379.9 343.3 381.3 343.6" fill="none" stroke="#f8d08e" stroke-width="0.85" stroke-linecap="round" stroke-linejoin="round"/>
<path d="M376.6 334.9 C378.0 335.1 382.6 335.4 384.7 336.2 C386.8 337.0 388.1 338.3 389.2 339.8 C390.2 341.3 390.2 343.7 391.0 345.2 C391.8 346.7 393.2 348.2 393.7 348.8" fill="none" stroke="#f8d08e" stroke-width="0.85" stroke-linecap="round" stroke-linejoin="round"/>
<path d="M381.3 343.6 C382.2 343.9 384.4 344.3 386.5 345.2 C388.6 346.1 392.1 347.5 393.7 348.8 C395.3 350.1 394.4 352.3 396.4 352.9 C398.3 353.5 402.7 352.3 405.4 352.4 C408.1 352.5 410.1 353.3 412.6 353.3 C415.1 353.3 417.6 352.6 420.3 352.2 C423.0 351.8 426.2 351.1 428.8 350.6 C431.4 350.1 433.3 349.3 436.0 349.3 C438.7 349.3 443.5 350.4 445.0 350.6" fill="none" stroke="#f8d08e" stroke-width="0.85" stroke-linecap="round" stroke-linejoin="round"/>
<path d="M396.4 352.9 C395.8 353.4 393.9 354.6 392.8 356.0 C391.8 357.4 390.9 359.9 390.1 361.4 C389.4 362.9 388.6 364.4 388.3 365.0" fill="none" stroke="#f8d08e" stroke-width="0.85" stroke-linecap="round" stroke-linejoin="round"/>
<path d="M420.3 352.2 C419.9 353.1 419.3 356.1 418.0 357.8 C416.7 359.5 413.8 361.1 412.6 362.3 C411.4 363.5 411.1 364.6 410.8 365.0" fill="none" stroke="#fae3b5" stroke-width="0.8" stroke-linecap="round" stroke-linejoin="round"/>
<path d="M307.4 380.0 C307.7 380.9 308.6 383.4 309.2 385.4 C309.8 387.3 309.6 390.2 311.0 391.7 C312.4 393.2 314.8 394.1 317.3 394.4 C319.9 394.7 324.5 393.1 326.3 393.5 C328.1 393.9 328.9 395.8 328.1 397.1 C327.4 398.5 323.3 400.1 321.8 401.6 C320.3 403.1 318.8 404.6 319.1 406.1 C319.4 407.6 322.1 409.4 323.6 410.6 C325.1 411.8 327.2 412.1 328.1 413.3 C329.0 414.5 329.1 416.3 329.0 417.8 C328.9 419.3 327.2 420.8 327.2 422.3 C327.2 423.8 328.7 426.1 329.0 426.8" fill="none" stroke="#f8d08e" stroke-width="0.85" stroke-linecap="round" stroke-linejoin="round"/>
<path d="M361.4 380.0 C360.5 380.9 357.6 383.3 356.0 385.4 C354.4 387.5 353.2 390.5 351.7 392.6 C350.2 394.7 348.4 395.8 347.0 398.0 C345.6 400.2 343.4 403.4 343.4 406.1 C343.4 408.8 346.6 411.6 347.0 414.2 C347.4 416.8 347.0 419.3 346.1 421.4 C345.2 423.5 343.0 425.1 341.6 426.8 C340.2 428.5 338.6 430.6 338.0 431.3" fill="none" stroke="#f8d08e" stroke-width="0.85" stroke-linecap="round" stroke-linejoin="round"/>
<path d="M351.7 392.6 C352.0 394.0 353.5 397.9 353.3 400.7 C353.1 403.5 351.4 406.8 350.6 409.7 C349.9 412.6 349.6 415.2 348.8 417.8 C348.1 420.4 346.7 422.8 346.1 425.0 C345.5 427.2 345.4 430.2 345.2 431.3" fill="none" stroke="#f8d08e" stroke-width="0.85" stroke-linecap="round" stroke-linejoin="round"/>
<path d="M335.0 371.1 C336.5 370.8 341.0 370.0 344.0 369.3 C347.0 368.6 350.6 366.8 353.0 367.1 C355.4 367.4 356.4 370.3 358.4 371.1 C360.3 371.9 362.3 372.1 364.7 372.0 C367.1 371.9 369.6 370.8 372.8 370.7 C376.0 370.6 380.9 371.0 383.6 371.1 C386.3 371.2 386.9 370.4 389.0 371.1 C391.1 371.9 393.8 373.7 396.2 375.6 C398.6 377.6 401.0 381.5 403.4 382.8 C405.8 384.1 407.3 383.0 410.6 383.7 C413.9 384.4 421.1 386.4 423.2 386.9" fill="none" stroke="#f8d08e" stroke-width="0.85" stroke-linecap="round" stroke-linejoin="round"/>
<path d="M358.4 371.1 C358.2 372.2 358.4 375.0 357.5 377.4 C356.6 379.8 354.0 383.0 353.0 385.5 C352.0 388.0 351.8 390.1 351.7 392.3 C351.6 394.6 352.0 397.9 352.1 399.0" fill="none" stroke="#f8d08e" stroke-width="0.85" stroke-linecap="round" stroke-linejoin="round"/>
<path d="M364.7 372.0 C364.1 373.1 362.3 376.2 361.1 378.3 C359.9 380.4 359.1 382.3 357.5 384.6 C355.9 386.9 352.7 391.0 351.7 392.3" fill="none" stroke="#f8d08e" stroke-width="0.85" stroke-linecap="round" stroke-linejoin="round"/>
<path d="M383.6 371.1 C384.5 370.2 387.6 367.6 389.0 365.7 C390.4 363.8 390.5 361.3 391.7 359.4 C392.9 357.4 395.4 354.9 396.2 354.0" fill="none" stroke="#f8d08e" stroke-width="0.85" stroke-linecap="round" stroke-linejoin="round"/>
<path d="M420.5 352.2 C420.1 353.2 419.3 356.7 417.8 358.5 C416.3 360.3 413.0 361.1 411.5 363.0 C410.0 364.9 408.7 367.6 408.8 370.2 C408.9 372.8 410.0 375.5 412.4 378.3 C414.8 381.1 421.4 385.5 423.2 386.9" fill="none" stroke="#f8d08e" stroke-width="0.85" stroke-linecap="round" stroke-linejoin="round"/>
<path d="M384.0 355.4 C386.3 355.1 391.6 354.0 397.6 353.4 C403.7 352.8 413.5 352.3 420.3 352.0 C427.1 351.7 432.9 351.3 438.4 351.4 C443.9 351.5 448.2 352.4 453.4 352.7 C458.6 353.0 466.3 352.3 469.7 353.4 C473.1 354.5 471.8 357.1 473.8 359.5 C475.8 361.9 480.2 364.8 481.9 367.7 C483.6 370.6 483.4 374.7 484.0 377.2 C484.6 379.7 485.1 381.7 485.3 382.6" fill="none" stroke="#f8d08e" stroke-width="0.85" stroke-linecap="round" stroke-linejoin="round"/>
<path d="M423.4 387.7 C424.8 388.4 428.7 390.7 431.6 392.2 C434.6 393.7 437.7 395.9 441.1 396.9 C444.5 397.9 448.8 398.6 452.0 398.3 C455.2 398.0 457.0 395.9 460.2 394.9 C463.4 393.9 467.8 393.6 471.0 392.2 C474.2 390.8 476.8 388.2 479.2 386.7 C481.6 385.2 484.3 383.9 485.3 383.3" fill="none" stroke="#f8d08e" stroke-width="0.85" stroke-linecap="round" stroke-linejoin="round"/>
<path d="M423.4 387.7 C422.0 386.6 417.6 384.2 415.3 381.3 C413.0 378.4 410.5 373.3 409.8 370.4 C409.1 367.4 409.8 365.6 411.2 363.6 C412.6 361.6 416.5 360.1 418.0 358.2 C419.5 356.3 419.9 353.0 420.3 352.0" fill="none" stroke="#f8d08e" stroke-width="0.85" stroke-linecap="round" stroke-linejoin="round"/>
<path d="M415.3 386.0 C414.6 387.9 411.6 393.9 411.2 397.6 C410.8 401.4 411.2 405.1 412.6 408.5 C414.0 411.9 417.4 415.4 419.4 418.0 C421.4 420.6 423.9 422.8 424.8 423.8" fill="none" stroke="#f8d08e" stroke-width="0.85" stroke-linecap="round" stroke-linejoin="round"/>
<path d="M424.8 423.8 C427.1 422.1 434.5 417.1 438.4 413.9 C442.2 410.7 445.6 407.0 447.9 404.4 C450.2 401.8 451.3 399.3 452.0 398.3" fill="none" stroke="#f8d08e" stroke-width="0.85" stroke-linecap="round" stroke-linejoin="round"/>
<path d="M424.8 423.8 C422.5 423.6 415.7 422.4 411.2 422.8 C406.7 423.2 402.1 425.0 397.6 426.2 C393.1 427.4 386.3 429.5 384.0 430.2" fill="none" stroke="#f8d08e" stroke-width="0.85" stroke-linecap="round" stroke-linejoin="round"/>
<path d="M424.8 423.8 C425.9 424.6 428.2 427.4 431.6 428.9 C435.0 430.4 442.9 432.3 445.2 433.0" fill="none" stroke="#f8d08e" stroke-width="0.85" stroke-linecap="round" stroke-linejoin="round"/>
<path d="M485.3 383.3 C485.9 385.2 487.4 391.4 488.7 394.9 C489.9 398.4 490.8 401.7 492.8 404.4 C494.9 407.1 498.3 408.5 501.0 411.2 C503.7 413.9 506.8 417.1 509.1 420.7 C511.4 424.3 513.7 430.9 514.6 433.0" fill="none" stroke="#f8d08e" stroke-width="0.85" stroke-linecap="round" stroke-linejoin="round"/>
<path d="M487.6 382.6 C488.9 382.5 492.6 381.5 495.5 382.0 C498.4 382.5 502.1 383.5 505.0 385.6 C507.9 387.8 510.7 392.0 513.2 394.9 C515.7 397.8 518.9 401.6 520.0 403.0" fill="none" stroke="#f8d08e" stroke-width="0.85" stroke-linecap="round" stroke-linejoin="round"/>
<path d="M505.0 385.6 C506.4 385.1 510.7 383.2 513.2 382.6 C515.7 382.0 518.9 382.1 520.0 382.0" fill="none" stroke="#f8d08e" stroke-width="0.85" stroke-linecap="round" stroke-linejoin="round"/>
<path d="M484.0 377.2 C483.2 375.4 480.9 369.2 479.2 366.3 C477.5 363.4 474.7 360.6 473.8 359.5" fill="none" stroke="#f8d08e" stroke-width="0.85" stroke-linecap="round" stroke-linejoin="round"/>
<path d="M469.7 352.6 C469.9 352.4 469.3 351.7 471.0 351.1 C472.7 350.5 477.0 348.9 480.0 348.8 C483.0 348.7 486.0 350.4 489.0 350.6 C492.0 350.8 495.0 350.8 498.0 350.2 C501.0 349.6 504.0 348.0 507.0 347.0 C510.0 346.0 513.0 345.4 516.0 344.3 C519.0 343.2 523.5 341.3 525.0 340.7" fill="none" stroke="#f8d08e" stroke-width="0.85" stroke-linecap="round" stroke-linejoin="round"/>
<path d="M470.1 352.4 C470.6 353.4 472.1 356.6 472.8 358.7 C473.6 360.8 474.3 363.9 474.6 365.0" fill="none" stroke="#f8d08e" stroke-width="0.85" stroke-linecap="round" stroke-linejoin="round"/>
<path d="M471.0 354.2 C472.1 354.8 475.5 356.0 477.3 357.8 C479.1 359.6 481.1 363.8 481.8 365.0" fill="none" stroke="#f8d08e" stroke-width="0.85" stroke-linecap="round" stroke-linejoin="round"/>
<path d="M510.0 382.6 C511.6 382.5 517.2 383.1 519.5 382.0 C521.8 380.9 520.6 377.7 523.6 375.8 C526.6 373.9 533.6 372.9 537.2 370.4 C540.8 367.8 543.8 362.1 545.1 360.5" fill="none" stroke="#f8d08e" stroke-width="0.85" stroke-linecap="round" stroke-linejoin="round"/>
<path d="M519.5 383.3 C520.9 384.3 523.6 389.2 527.7 389.4 C531.8 389.6 539.2 384.6 544.0 384.7 C548.8 384.8 552.1 389.1 556.2 390.1 C560.3 391.1 565.5 391.4 568.5 390.8 C571.5 390.2 570.0 387.7 573.9 386.7 C577.8 385.7 587.8 384.5 591.6 384.7 C595.5 384.9 595.4 387.4 597.0 388.1 C598.6 388.8 600.7 388.9 601.4 389.0" fill="none" stroke="#f8d08e" stroke-width="0.85" stroke-linecap="round" stroke-linejoin="round"/>
<path d="M601.4 389.0 C603.4 388.3 608.2 385.6 613.4 384.7 C618.6 383.8 627.0 383.8 632.4 383.3 C637.8 382.9 643.7 382.2 646.0 382.0" fill="none" stroke="#f8d08e" stroke-width="0.85" stroke-linecap="round" stroke-linejoin="round"/>
<path d="M601.4 389.0 C601.6 389.8 604.1 391.8 602.5 393.5 C600.9 395.2 595.7 396.9 591.6 399.0 C587.5 401.1 581.2 403.3 578.0 405.8 C574.8 408.3 574.9 411.4 572.6 413.9 C570.3 416.4 566.5 418.9 564.4 420.7 C562.3 422.5 560.7 423.9 560.0 424.5" fill="none" stroke="#f8d08e" stroke-width="0.85" stroke-linecap="round" stroke-linejoin="round"/>
<path d="M510.0 392.2 C511.1 393.3 514.5 396.1 516.8 399.0 C519.1 401.9 520.2 407.3 523.6 409.8 C527.0 412.3 532.7 412.5 537.2 413.9 C541.7 415.3 547.0 416.2 550.8 418.0 C554.6 419.8 558.5 423.4 560.0 424.5" fill="none" stroke="#f8d08e" stroke-width="0.85" stroke-linecap="round" stroke-linejoin="round"/>
<path d="M571.2 420.7 C572.3 421.6 574.6 426.3 578.0 426.2 C581.4 426.1 587.1 420.5 591.6 420.0 C596.1 419.5 601.4 421.2 605.2 423.4 C609.1 425.6 613.1 431.4 614.7 433.0" fill="none" stroke="#f8d08e" stroke-width="0.85" stroke-linecap="round" stroke-linejoin="round"/>
<path d="M560.0 424.5 C558.5 425.2 554.6 428.3 550.8 428.9 C547.0 429.5 541.7 428.0 537.2 428.2 C532.7 428.4 528.1 430.1 523.6 430.2 C519.1 430.3 512.3 429.1 510.0 428.9" fill="none" stroke="#f8d08e" stroke-width="0.85" stroke-linecap="round" stroke-linejoin="round"/>
<path d="M560.0 424.5 L554.9 433.0" fill="none" stroke="#f8d08e" stroke-width="0.85" stroke-linecap="round" stroke-linejoin="round"/>
<path d="M525.0 341.0 C527.0 341.3 533.0 342.0 537.0 342.8 C541.0 343.6 545.2 344.7 549.0 345.8 C552.8 346.9 557.4 349.2 559.8 349.4 C562.2 349.6 562.4 348.2 563.4 347.0 C564.4 345.8 564.2 343.6 565.8 342.2 C567.4 340.8 570.4 339.8 573.0 338.6 C575.6 337.4 578.2 335.4 581.4 335.0 C584.6 334.6 588.8 335.9 592.2 336.2 C595.6 336.5 599.0 336.1 601.8 336.8 C604.6 337.5 606.2 339.2 609.0 340.4 C611.8 341.6 615.9 343.3 618.6 344.0 C621.3 344.7 622.8 344.5 625.2 344.8 C627.6 345.1 629.7 345.6 633.0 346.0 C636.3 346.4 643.0 346.8 645.0 347.0" fill="none" stroke="#f8d08e" stroke-width="0.85" stroke-linecap="round" stroke-linejoin="round"/>
<path d="M544.8 360.2 C546.1 359.6 550.3 358.0 552.6 356.6 C554.9 355.2 556.8 353.4 558.6 351.8 C560.4 350.2 562.6 347.8 563.4 347.0" fill="none" stroke="#f8d08e" stroke-width="0.85" stroke-linecap="round" stroke-linejoin="round"/>
<path d="M563.4 347.0 C564.2 348.0 566.2 352.0 568.2 353.0 C570.2 354.0 573.0 353.1 575.4 353.0 C577.8 352.9 580.2 352.0 582.6 352.4 C585.0 352.8 587.4 354.3 589.8 355.4 C592.2 356.5 593.8 357.8 597.0 359.0 C600.2 360.2 605.0 361.2 609.0 362.6 C613.0 364.0 617.0 366.0 621.0 367.4 C625.0 368.8 629.0 369.2 633.0 371.0 C637.0 372.8 643.0 377.0 645.0 378.2" fill="none" stroke="#f8d08e" stroke-width="0.85" stroke-linecap="round" stroke-linejoin="round"/>
<path d="M635.0 347.0 C637.0 346.8 643.0 346.6 647.0 345.8 C651.0 345.0 655.6 343.2 659.0 342.4 C662.4 341.6 664.7 340.6 667.4 341.0 C670.1 341.4 672.6 343.9 675.2 344.8 C677.8 345.7 680.3 346.5 683.0 346.6 C685.7 346.7 689.1 346.1 691.4 345.6 C693.7 345.1 694.2 344.8 696.8 343.6 C699.4 342.4 703.7 340.1 707.0 338.4 C710.3 336.7 713.8 335.4 716.6 333.6 C719.4 331.8 722.0 329.7 723.8 327.6 C725.6 325.5 727.0 322.3 727.6 321.2" fill="none" stroke="#f8d08e" stroke-width="0.85" stroke-linecap="round" stroke-linejoin="round"/>
<path d="M636.0 375.2 C637.1 375.4 641.0 375.5 642.8 376.5 C644.6 377.5 645.1 380.2 646.9 381.3 C648.7 382.4 650.0 382.0 653.7 383.3 C657.4 384.6 665.4 387.6 669.3 389.2 C673.1 390.8 674.0 391.9 676.8 392.8 C679.6 393.8 684.0 395.5 686.3 394.9 C688.6 394.3 688.1 391.3 690.4 389.4 C692.7 387.5 697.2 384.7 699.9 383.3 C702.6 381.9 703.7 381.3 706.7 381.0 C709.7 380.7 714.3 381.7 717.9 381.6 C721.5 381.5 725.8 380.7 728.5 380.6 C731.2 380.5 731.6 381.3 733.9 381.0 C736.2 380.7 739.6 378.0 742.1 378.6 C744.6 379.2 746.6 383.2 748.9 384.7 C751.2 386.2 752.8 386.6 755.7 387.4 C758.7 388.2 763.9 388.9 766.6 389.4 C769.3 389.8 771.1 390.0 772.0 390.1" fill="none" stroke="#f8d08e" stroke-width="0.85" stroke-linecap="round" stroke-linejoin="round"/>
<path d="M636.0 385.4 C636.9 385.2 639.6 384.7 641.4 384.0 C643.2 383.3 646.0 381.8 646.9 381.3" fill="none" stroke="#f8d08e" stroke-width="0.85" stroke-linecap="round" stroke-linejoin="round"/>
<path d="M662.1 427.0 L657.8 433.0" fill="none" stroke="#fae3b5" stroke-width="0.8" stroke-linecap="round" stroke-linejoin="round"/>
<path d="M766.8 390.3 L780.8 392.6" fill="none" stroke="#f8d08e" stroke-width="0.85" stroke-linecap="round" stroke-linejoin="round"/>
<path d="M788.3 351.8 C788.6 351.4 788.4 349.7 790.3 349.1 C792.2 348.5 795.5 347.9 799.8 348.4 C804.1 348.8 812.6 351.7 816.2 351.8 C819.8 351.9 820.2 350.5 821.6 349.1 C823.0 347.7 824.5 345.4 824.3 343.6 C824.1 341.8 820.9 339.1 820.2 338.2" fill="none" stroke="#f8d08e" stroke-width="0.85" stroke-linecap="round" stroke-linejoin="round"/>
<path d="M816.2 351.8 C816.9 352.7 820.2 355.6 820.2 357.2 C820.2 358.8 817.8 359.9 816.2 361.3 C814.6 362.7 812.4 363.3 810.7 365.4 C809.0 367.4 807.1 371.3 806.2 373.6 C805.3 375.9 804.1 376.7 805.3 379.0 C806.5 381.3 810.7 384.9 813.4 387.2 C816.1 389.5 820.2 391.7 821.6 392.6" fill="none" stroke="#f8d08e" stroke-width="0.85" stroke-linecap="round" stroke-linejoin="round"/>
<path d="M827.0 335.5 C828.4 336.9 831.6 341.6 835.2 343.6 C838.8 345.6 845.2 345.7 848.8 347.7 C852.4 349.7 852.2 353.9 856.7 355.5 C861.2 357.1 872.8 356.9 876.0 357.2" fill="none" stroke="#f8d08e" stroke-width="0.85" stroke-linecap="round" stroke-linejoin="round"/>
<path d="M806.2 373.6 C809.2 373.4 820.8 372.0 824.3 372.2 C827.8 372.4 823.4 374.9 827.0 374.9 C830.6 374.9 840.2 372.2 846.1 372.2 C852.0 372.2 858.8 373.3 862.4 374.9 C866.0 376.5 867.8 379.2 867.8 381.7 C867.8 384.2 864.2 388.1 862.4 389.9 C860.6 391.7 857.9 392.2 857.0 392.6" fill="none" stroke="#f8d08e" stroke-width="0.85" stroke-linecap="round" stroke-linejoin="round"/>
<path d="M766.4 391.0 C768.0 391.3 772.8 391.9 776.3 392.6 C779.8 393.3 784.5 394.7 787.2 395.4 C789.9 396.1 790.3 395.8 792.6 396.7 C794.9 397.6 798.8 399.9 800.8 400.8 C802.8 401.7 804.2 402.0 804.9 402.2" fill="none" stroke="#f8d08e" stroke-width="0.85" stroke-linecap="round" stroke-linejoin="round"/>
<path d="M792.6 396.7 C792.4 398.3 792.6 403.5 791.3 406.2 C789.9 408.9 787.5 411.4 784.5 413.0 C781.5 414.6 776.8 414.7 773.6 415.8 C770.4 416.9 767.7 418.7 765.4 419.8 C763.1 420.9 760.9 422.1 760.0 422.6" fill="none" stroke="#f8d08e" stroke-width="0.85" stroke-linecap="round" stroke-linejoin="round"/>
<path d="M804.9 373.6 C805.1 374.7 804.6 378.1 806.2 380.4 C807.8 382.7 812.4 385.8 814.4 387.2 C816.4 388.6 816.2 388.3 818.5 388.6 C820.8 388.9 824.1 388.5 828.0 389.2 C831.9 389.9 837.1 391.4 841.6 392.6 C846.1 393.9 852.0 396.2 855.2 396.7 C858.4 397.2 858.6 397.0 860.6 395.4 C862.6 393.8 866.3 389.7 867.4 387.2 C868.5 384.7 868.1 382.7 867.4 380.4 C866.7 378.1 866.8 375.0 863.4 373.6 C860.0 372.2 851.5 372.3 847.0 372.2 C842.5 372.1 838.0 372.8 836.2 372.9" fill="none" stroke="#f8d08e" stroke-width="0.85" stroke-linecap="round" stroke-linejoin="round"/>
<path d="M804.9 402.2 C806.5 402.4 812.1 401.9 814.4 403.5 C816.7 405.1 817.1 409.2 818.5 411.7 C819.9 414.2 821.0 416.9 822.6 418.5 C824.2 420.1 825.7 421.2 828.0 421.2 C830.3 421.2 834.4 417.4 836.2 418.5 C838.0 419.6 838.2 425.7 838.9 428.0 C839.6 430.3 840.0 431.4 840.2 432.1" fill="none" stroke="#f8d08e" stroke-width="0.85" stroke-linecap="round" stroke-linejoin="round"/>
<path d="M828.0 421.2 C826.6 422.1 821.4 424.8 819.8 426.6 C818.2 428.4 818.7 431.2 818.5 432.1" fill="none" stroke="#f8d08e" stroke-width="0.85" stroke-linecap="round" stroke-linejoin="round"/>
<path d="M858.0 351.8 C860.0 352.6 866.0 355.4 870.0 356.6 C874.0 357.8 878.0 358.0 882.0 359.0 C886.0 360.0 890.0 361.0 894.0 362.6 C898.0 364.2 902.0 367.0 906.0 368.6 C910.0 370.2 915.0 370.6 918.0 372.2 C921.0 373.8 922.4 375.6 924.0 378.2 C925.6 380.8 927.0 386.2 927.6 387.8" fill="none" stroke="#f8d08e" stroke-width="0.85" stroke-linecap="round" stroke-linejoin="round"/>
<path d="M926.4 333.8 C927.4 334.8 930.2 337.2 932.4 339.8 C934.6 342.4 937.6 346.4 939.6 349.4 C941.6 352.4 942.4 355.2 944.4 357.8 C946.4 360.4 950.8 363.0 951.6 365.0 C952.4 367.0 950.6 368.4 949.2 369.8 C947.8 371.2 944.6 371.2 943.2 373.4 C941.8 375.6 941.2 381.4 940.8 383.0" fill="none" stroke="#f8d08e" stroke-width="0.85" stroke-linecap="round" stroke-linejoin="round"/>
<path d="M927.6 387.2 C929.2 386.4 935.0 384.0 937.2 382.4 C939.4 380.8 939.6 379.2 940.8 377.6 C942.0 376.0 942.6 374.4 944.4 372.8 C946.2 371.2 950.4 368.8 951.6 368.0" fill="none" stroke="#f8d08e" stroke-width="0.85" stroke-linecap="round" stroke-linejoin="round"/>
<path d="M926.4 378.8 C926.6 380.2 928.2 384.2 927.6 387.2 C927.0 390.2 924.4 394.4 922.8 396.8 C921.2 399.2 920.0 400.4 918.0 401.6 C916.0 402.8 912.8 402.8 910.8 404.0 C908.8 405.2 907.4 406.8 906.0 408.8 C904.6 410.8 903.4 413.6 902.4 416.0 C901.4 418.4 900.4 422.0 900.0 423.2" fill="none" stroke="#f8d08e" stroke-width="0.85" stroke-linecap="round" stroke-linejoin="round"/>
<path d="M940.8 382.4 C939.8 384.0 937.0 389.4 934.8 392.0 C932.6 394.6 929.6 396.0 927.6 398.0 C925.6 400.0 923.6 401.0 922.8 404.0 C922.0 407.0 922.4 412.4 922.8 416.0 C923.2 419.6 924.7 423.0 925.2 425.6 C925.7 428.2 925.7 430.6 925.8 431.6" fill="none" stroke="#f8d08e" stroke-width="0.85" stroke-linecap="round" stroke-linejoin="round"/>
<path d="M918.0 401.6 C917.6 402.8 915.2 406.0 915.6 408.8 C916.0 411.6 919.2 415.8 920.4 418.4 C921.6 421.0 922.4 423.4 922.8 424.4" fill="none" stroke="#f8d08e" stroke-width="0.85" stroke-linecap="round" stroke-linejoin="round"/>
<path d="M153.0 311.0 L151.2 315.8 L149.4 323.0 L148.8 330.2 L151.2 337.4 L154.8 341.0 L156.0 345.8 L162.0 348.2 L163.8 351.8 L164.4 359.0 L159.6 363.8 L157.2 371.0 L154.8 377.0 L147.6 378.2 L145.2 383.0" fill="none" stroke="#a995f5" stroke-width="0.9" stroke-linejoin="round" stroke-linecap="round"/>
<path d="M162.0 348.2 L168.0 349.2 L175.2 348.2 L182.4 345.8 L187.2 341.0 L192.0 338.6 L199.2 338.8 L206.4 339.2 L210.6 336.8 L211.8 334.4" fill="none" stroke="#a995f5" stroke-width="0.9" stroke-linejoin="round" stroke-linecap="round"/>
<path d="M217.2 311 L219.6 316.4 L220.5 325 L215 331 L211.8 334.4" fill="none" stroke="#a995f5" stroke-width="0.9" stroke-linejoin="round" stroke-linecap="round"/>
<path d="M317 310.5 L315.5 312.5 L311.5 314 L309 315.8 L304 317.6 L303 322 L307 328 L309.2 334" fill="none" stroke="#a995f5" stroke-width="0.9" stroke-linejoin="round" stroke-linecap="round"/>
<path d="M309.2 334.1 L309.7 339.9 L310.1 346.2 L304.7 350.7 L302.0 353.6" fill="none" stroke="#a995f5" stroke-width="0.9" stroke-linejoin="round" stroke-linecap="round"/>
<path d="M278.6 334.1 L280.9 335.2 L284.0 334.1" fill="none" stroke="#a995f5" stroke-width="0.9" stroke-linejoin="round" stroke-linecap="round"/>
<path d="M726.2 324.8 L733.4 327.8 L737.0 324.8 L751.4 327.2 L755.0 323.0" fill="none" stroke="#a995f5" stroke-width="0.9" stroke-linejoin="round" stroke-linecap="round"/>
<path d="M740.0 325.3 L752.2 328.0 L755.0 322.6 L760.4 322.6 L763.1 326.0 L769.2 332.1 L772.0 336.2 L779.4 339.6" fill="none" stroke="#a995f5" stroke-width="0.9" stroke-linejoin="round" stroke-linecap="round"/>
<path d="M779.4 339.6 L782.2 343.6 L784.9 350.4 L783.5 355.9 L780.8 362.7 L783.5 369.5 L784.9 374.9 L794.4 377.6 L802.6 381.7 L808.0 387.2 L813.4 392.6" fill="none" stroke="#a995f5" stroke-width="0.9" stroke-linejoin="round" stroke-linecap="round"/>
<path d="M779.4 339.6 L787.6 337.5 L798.5 335.5 L808.0 336.2 L816.2 335.5 L820.2 336.8 L821.6 340.2 L827.0 343.0" fill="none" stroke="#a995f5" stroke-width="0.9" stroke-linejoin="round" stroke-linecap="round"/>
<path d="M827.0 343.0 L832.5 345.0 L835.2 350.4 L831.1 354.5 L833.8 358.6 L840.6 365.4 L846.1 370.8 L847.4 376.3 L843.4 381.7 L844.7 387.2 L848.8 392.6" fill="none" stroke="#a995f5" stroke-width="0.9" stroke-linejoin="round" stroke-linecap="round"/>
<path d="M821.6 340.2 L824.3 336.8 L828.4 334.8 L835.2 331.4 L843.4 332.8 L852.9 334.1 L859.7 340.9 L865.1 338.2 L867.8 332.8 L869.2 327.3" fill="none" stroke="#a995f5" stroke-width="0.9" stroke-linejoin="round" stroke-linecap="round"/>
<path d="M857.0 316.4 L859.7 313.7 L862.4 311.0 L869.2 315.1 L876.0 313.7" fill="none" stroke="#a995f5" stroke-width="0.9" stroke-linejoin="round" stroke-linecap="round"/>
<path d="M882.0 334.4 L888.0 336.8 L894.0 339.2 L898.8 336.8 L901.2 333.8" fill="none" stroke="#a995f5" stroke-width="0.9" stroke-linejoin="round" stroke-linecap="round"/>
<path d="M915.6 311.0 L918.0 315.8 L920.4 313.4 L918.0 311.0" fill="none" stroke="#a995f5" stroke-width="0.9" stroke-linejoin="round" stroke-linecap="round"/>
<path d="M780.4 360.0 L783.1 368.2 L784.5 375.0 L800.8 378.4 L807.6 384.5 L814.4 391.3 L818.5 398.1 L823.9 406.2 L830.7 413.0 L836.2 417.1 L847.0 419.2 L853.8 419.8 L860.6 418.5 L863.4 414.4 L862.0 410.3 L864.7 406.2 L860.6 402.2 L857.9 399.4 L862.0 395.4" fill="none" stroke="#a995f5" stroke-width="0.9" stroke-linejoin="round" stroke-linecap="round"/>
<path d="M814.4 391.3 L819.8 386.5 L825.3 391.3 L830.7 396.0 L836.2 394.0 L841.6 396.7 L843.0 402.2 L848.4 404.9 L855.2 406.2 L860.6 407.6" fill="none" stroke="#a995f5" stroke-width="0.9" stroke-linejoin="round" stroke-linecap="round"/>
<path d="M832.1 360.0 L838.9 365.4 L847.0 369.5 L844.3 377.7 L837.5 380.4 L841.6 384.5 L844.3 388.6 L852.5 394.0 L857.9 392.6 L862.0 395.4" fill="none" stroke="#a995f5" stroke-width="0.9" stroke-linejoin="round" stroke-linecap="round"/>
<path d="M863.4 414.4 L868.8 410.3 L875.6 404.9 L882.4 399.4 L889.2 395.4 L896.0 392.6" fill="none" stroke="#a995f5" stroke-width="0.9" stroke-linejoin="round" stroke-linecap="round"/>
<path d="M894.0 395.0 L901.8 390.2 L906.0 395.6 L912.0 401.0 L906.0 404.0 L907.2 408.8 L911.4 413.6 L904.8 417.2 L909.6 425.6 L915.6 431.6" fill="none" stroke="#a995f5" stroke-width="0.9" stroke-linejoin="round" stroke-linecap="round"/>
<path d="M807.6 384.5 L805.6 391.3 L804.9 399.4 L794.0 400.8 L795.4 406.2 L798.8 414.4 L800.8 422.6 L801.5 432.1" fill="none" stroke="#a995f5" stroke-width="0.9" stroke-linejoin="round" stroke-linecap="round"/>
<text x="184.2" y="319.5" font-size="8.3" text-anchor="middle" fill="none" stroke="#fdfcf5" stroke-opacity=".85" stroke-width="1.1" stroke-linejoin="round" letter-spacing=".1">NORTH</text>
<text x="184.2" y="319.5" font-size="8.3" text-anchor="middle" fill="#87878b" stroke="#87878b" stroke-width="0.1" letter-spacing=".1">NORTH</text>
<text x="184.2" y="330.1" font-size="8.3" text-anchor="middle" fill="none" stroke="#fdfcf5" stroke-opacity=".85" stroke-width="1.1" stroke-linejoin="round" letter-spacing=".1">MACEDONIA</text>
<text x="184.2" y="330.1" font-size="8.3" text-anchor="middle" fill="#87878b" stroke="#87878b" stroke-width="0.1" letter-spacing=".1">MACEDONIA</text>
<text x="178.9" y="409.5" font-size="8.7" text-anchor="middle" fill="none" stroke="#fdfcf5" stroke-opacity=".85" stroke-width="1.1" stroke-linejoin="round" letter-spacing=".3">GREECE</text>
<text x="178.9" y="409.5" font-size="8.7" text-anchor="middle" fill="#87878b" stroke="#87878b" stroke-width="0.1" letter-spacing=".3">GREECE</text>
<text x="554.8" y="410.4" font-size="9.4" text-anchor="middle" fill="none" stroke="#fdfcf5" stroke-opacity=".85" stroke-width="1.1" stroke-linejoin="round" letter-spacing=".25">TÜRKİYE</text>
<text x="554.8" y="410.4" font-size="9.4" text-anchor="middle" fill="#87878b" stroke="#87878b" stroke-width="0.15" letter-spacing=".25">TÜRKİYE</text>
<text x="891.9" y="370.2" font-size="8.0" text-anchor="middle" fill="none" stroke="#fdfcf5" stroke-opacity=".85" stroke-width="1.1" stroke-linejoin="round" letter-spacing=".3">AZƏRBAYCAN</text>
<text x="891.9" y="370.2" font-size="8.0" text-anchor="middle" fill="#87878b" stroke="#87878b" stroke-width="0.15" letter-spacing=".3">AZƏRBAYCAN</text>
<circle cx="256.6" cy="346.5" r="1.2" fill="#fff" stroke="#666" stroke-width=".55"/>
<text x="257" y="342.6" font-size="6.1" text-anchor="middle" fill="none" stroke="#fdfcf5" stroke-opacity=".85" stroke-width="1.1" stroke-linejoin="round">Kavala</text>
<text x="257" y="342.6" font-size="6.1" text-anchor="middle" fill="#555" stroke="#555" stroke-width="0.1">Kavala</text>
<circle cx="216.4" cy="357.6" r="1.2" fill="#fff" stroke="#666" stroke-width=".55"/>
<text x="216" y="353.4" font-size="6.3" text-anchor="middle" fill="none" stroke="#fdfcf5" stroke-opacity=".85" stroke-width="1.1" stroke-linejoin="round">Thessaloniki</text>
<text x="216" y="353.4" font-size="6.3" text-anchor="middle" fill="#1e1e1e" stroke="#1e1e1e" stroke-width="0.22">Thessaloniki</text>
<circle cx="201.9" cy="392.9" r="1.2" fill="#fff" stroke="#666" stroke-width=".55"/>
<text x="201.9" y="389.6" font-size="6.2" text-anchor="middle" fill="none" stroke="#fdfcf5" stroke-opacity=".85" stroke-width="1.1" stroke-linejoin="round">Larissa</text>
<text x="201.9" y="389.6" font-size="6.2" text-anchor="middle" fill="#2a2a2a" stroke="#2a2a2a" stroke-width="0.2">Larissa</text>
<circle cx="216.4" cy="402.2" r="1.2" fill="#fff" stroke="#666" stroke-width=".55"/>
<text x="216.4" y="399.5" font-size="6.2" text-anchor="middle" fill="none" stroke="#fdfcf5" stroke-opacity=".85" stroke-width="1.1" stroke-linejoin="round">Volos</text>
<text x="216.4" y="399.5" font-size="6.2" text-anchor="middle" fill="#666" stroke="#666" stroke-width="0.05">Volos</text>
<circle cx="152.2" cy="392" r="1.2" fill="#fff" stroke="#666" stroke-width=".55"/>
<text x="159" y="388.6" font-size="6.3" text-anchor="middle" fill="none" stroke="#fdfcf5" stroke-opacity=".85" stroke-width="1.1" stroke-linejoin="round">Ioannina</text>
<text x="159" y="388.6" font-size="6.3" text-anchor="middle" fill="#2a2a2a" stroke="#2a2a2a" stroke-width="0.2">Ioannina</text>
<circle cx="311" cy="374.4" r="1.2" fill="#fff" stroke="#666" stroke-width=".55"/>
<text x="311.2" y="381.9" font-size="6.4" text-anchor="middle" fill="none" stroke="#fdfcf5" stroke-opacity=".85" stroke-width="1.1" stroke-linejoin="round">Çanakkale</text>
<text x="311.2" y="381.9" font-size="6.4" text-anchor="middle" fill="#2a2a2a" stroke="#2a2a2a" stroke-width="0.14">Çanakkale</text>
<circle cx="351.7" cy="392.5" r="1.2" fill="#fff" stroke="#666" stroke-width=".55"/>
<text x="351.7" y="388.4" font-size="6.8" text-anchor="middle" fill="none" stroke="#fdfcf5" stroke-opacity=".85" stroke-width="1.1" stroke-linejoin="round">Balıkesir</text>
<text x="351.7" y="388.4" font-size="6.8" text-anchor="middle" fill="#2a2a2a" stroke="#2a2a2a" stroke-width="0.14">Balıkesir</text>
<circle cx="315.5" cy="411.7" r="1.2" fill="#fff" stroke="#666" stroke-width=".55"/>
<text x="303.8" y="414.1" font-size="6.9" text-anchor="middle" fill="none" stroke="#fdfcf5" stroke-opacity=".85" stroke-width="1.1" stroke-linejoin="round">Mitilini</text>
<text x="303.8" y="414.1" font-size="6.9" text-anchor="middle" fill="#2e2e2e" stroke="#2e2e2e" stroke-width="0.14">Mitilini</text>
<text x="331.3" y="431.6" font-size="7.4" text-anchor="middle" fill="none" stroke="#fdfcf5" stroke-opacity=".85" stroke-width="1.1" stroke-linejoin="round">İzmir</text>
<text x="331.3" y="431.6" font-size="7.4" text-anchor="middle" fill="#1e1e1e" stroke="#1e1e1e" stroke-width="0.2">İzmir</text>
<circle cx="381.3" cy="343.6" r="1.2" fill="#fff" stroke="#666" stroke-width=".55"/>
<text x="381.5" y="351.9" font-size="8.3" text-anchor="middle" fill="none" stroke="#fdfcf5" stroke-opacity=".85" stroke-width="1.1" stroke-linejoin="round">İstanbul</text>
<text x="381.5" y="351.9" font-size="8.3" text-anchor="middle" fill="#1e1e1e" stroke="#1e1e1e" stroke-width="0.2">İstanbul</text>
<circle cx="420.3" cy="352" r="1.2" fill="#fff" stroke="#666" stroke-width=".55"/>
<text x="420.3" y="348.8" font-size="6.3" text-anchor="middle" fill="none" stroke="#fdfcf5" stroke-opacity=".85" stroke-width="1.1" stroke-linejoin="round">Sakarya</text>
<text x="420.3" y="348.8" font-size="6.3" text-anchor="middle" fill="#2a2a2a" stroke="#2a2a2a" stroke-width="0.14">Sakarya</text>
<circle cx="453.4" cy="354" r="1.2" fill="#fff" stroke="#666" stroke-width=".55"/>
<text x="453.4" y="350.6" font-size="6.3" text-anchor="middle" fill="none" stroke="#fdfcf5" stroke-opacity=".85" stroke-width="1.1" stroke-linejoin="round">Bolu</text>
<text x="453.4" y="350.6" font-size="6.3" text-anchor="middle" fill="#2a2a2a" stroke="#2a2a2a" stroke-width="0.14">Bolu</text>
<circle cx="383.6" cy="373.4" r="1.2" fill="#fff" stroke="#666" stroke-width=".55"/>
<text x="383.6" y="369.4" font-size="6.9" text-anchor="middle" fill="none" stroke="#fdfcf5" stroke-opacity=".85" stroke-width="1.1" stroke-linejoin="round">Bursa</text>
<text x="383.6" y="369.4" font-size="6.9" text-anchor="middle" fill="#1e1e1e" stroke="#1e1e1e" stroke-width="0.2">Bursa</text>
<circle cx="423.4" cy="387.7" r="1.2" fill="#fff" stroke="#666" stroke-width=".55"/>
<text x="423" y="384.3" font-size="6.4" text-anchor="middle" fill="none" stroke="#fdfcf5" stroke-opacity=".85" stroke-width="1.1" stroke-linejoin="round">Eskişehir</text>
<text x="423" y="384.3" font-size="6.4" text-anchor="middle" fill="#2a2a2a" stroke="#2a2a2a" stroke-width="0.14">Eskişehir</text>
<circle cx="487.6" cy="382.6" r="1.45" fill="#fff" stroke="#555" stroke-width=".55"/><circle cx="487.6" cy="382.6" r=".6" fill="#555"/>
<text x="487.4" y="378.7" font-size="8.1" text-anchor="middle" fill="none" stroke="#fdfcf5" stroke-opacity=".85" stroke-width="1.1" stroke-linejoin="round">Ankara</text>
<text x="487.4" y="378.7" font-size="8.1" text-anchor="middle" fill="#1e1e1e" stroke="#1e1e1e" stroke-width="0.2">Ankara</text>
<circle cx="505" cy="385.6" r="1.2" fill="#fff" stroke="#666" stroke-width=".55"/>
<text x="505" y="393.1" font-size="6.5" text-anchor="middle" fill="none" stroke="#fdfcf5" stroke-opacity=".85" stroke-width="1.1" stroke-linejoin="round">Kırıkkale</text>
<text x="505" y="393.1" font-size="6.5" text-anchor="middle" fill="#2a2a2a" stroke="#2a2a2a" stroke-width="0.14">Kırıkkale</text>
<circle cx="512.8" cy="330.4" r="1.2" fill="#fff" stroke="#666" stroke-width=".55"/>
<text x="512.8" y="326.8" font-size="6.35" text-anchor="middle" fill="none" stroke="#fdfcf5" stroke-opacity=".85" stroke-width="1.1" stroke-linejoin="round">Kastamonu</text>
<text x="512.8" y="326.8" font-size="6.35" text-anchor="middle" fill="#2a2a2a" stroke="#2a2a2a" stroke-width="0.14">Kastamonu</text>
<circle cx="545.1" cy="360.5" r="1.2" fill="#fff" stroke="#666" stroke-width=".55"/>
<text x="545.1" y="356.7" font-size="6.4" text-anchor="middle" fill="none" stroke="#fdfcf5" stroke-opacity=".85" stroke-width="1.1" stroke-linejoin="round">Çorum</text>
<text x="545.1" y="356.7" font-size="6.4" text-anchor="middle" fill="#2a2a2a" stroke="#2a2a2a" stroke-width="0.14">Çorum</text>
<circle cx="425" cy="423.8" r="1.2" fill="#fff" stroke="#666" stroke-width=".55"/>
<text x="424.5" y="420.3" font-size="6.4" text-anchor="middle" fill="none" stroke="#fdfcf5" stroke-opacity=".85" stroke-width="1.1" stroke-linejoin="round">Afyonkarahisar</text>
<text x="424.5" y="420.3" font-size="6.4" text-anchor="middle" fill="#2a2a2a" stroke="#2a2a2a" stroke-width="0.14">Afyonkarahisar</text>
<circle cx="560" cy="424.5" r="1.2" fill="#fff" stroke="#666" stroke-width=".55"/>
<text x="560" y="420.8" font-size="6.9" text-anchor="middle" fill="none" stroke="#fdfcf5" stroke-opacity=".85" stroke-width="1.1" stroke-linejoin="round">Kayseri</text>
<text x="560" y="420.8" font-size="6.9" text-anchor="middle" fill="#1e1e1e" stroke="#1e1e1e" stroke-width="0.2">Kayseri</text>
<text x="519.5" y="433.8" font-size="6.4" text-anchor="middle" fill="none" stroke="#fdfcf5" stroke-opacity=".85" stroke-width="1.1" stroke-linejoin="round">Aksaray</text>
<text x="519.5" y="433.8" font-size="6.4" text-anchor="middle" fill="#2a2a2a" stroke="#2a2a2a" stroke-width="0.14">Aksaray</text>
<text x="540.5" y="313.6" font-size="6.4" text-anchor="middle" fill="none" stroke="#fdfcf5" stroke-opacity=".85" stroke-width="1.1" stroke-linejoin="round">Sinop</text>
<text x="540.5" y="313.6" font-size="6.4" text-anchor="middle" fill="#2a2a2a" stroke="#2a2a2a" stroke-width="0.14">Sinop</text>
<text x="535.2" y="337.7" font-size="5.8" text-anchor="middle" fill="#4d8fe0" transform="rotate(-40 535.2 335.6)" font-style="italic">Kızılırmak</text>
<text x="509.8" y="411.9" font-size="5.8" text-anchor="middle" fill="#4d8fe0" transform="rotate(52 509.8 409.8)" font-style="italic">Kızılırmak</text>
<circle cx="583" cy="333.2" r="1.2" fill="#fff" stroke="#666" stroke-width=".55"/>
<text x="583" y="341.1" font-size="6.35" text-anchor="middle" fill="none" stroke="#fdfcf5" stroke-opacity=".85" stroke-width="1.1" stroke-linejoin="round">Samsun</text>
<text x="583" y="341.1" font-size="6.35" text-anchor="middle" fill="#2a2a2a" stroke="#2a2a2a" stroke-width="0.14">Samsun</text>
<circle cx="625.2" cy="344.8" r="1.2" fill="#fff" stroke="#666" stroke-width=".55"/>
<text x="625.2" y="352.3" font-size="6.35" text-anchor="middle" fill="none" stroke="#fdfcf5" stroke-opacity=".85" stroke-width="1.1" stroke-linejoin="round">Ordu</text>
<text x="625.2" y="352.3" font-size="6.35" text-anchor="middle" fill="#2a2a2a" stroke="#2a2a2a" stroke-width="0.14">Ordu</text>
<circle cx="675.2" cy="343.6" r="1.2" fill="#fff" stroke="#666" stroke-width=".55"/>
<text x="675.8" y="351.1" font-size="6.35" text-anchor="middle" fill="none" stroke="#fdfcf5" stroke-opacity=".85" stroke-width="1.1" stroke-linejoin="round">Trabzon</text>
<text x="675.8" y="351.1" font-size="6.35" text-anchor="middle" fill="#2a2a2a" stroke="#2a2a2a" stroke-width="0.14">Trabzon</text>
<circle cx="696.8" cy="342.8" r="1.2" fill="#fff" stroke="#666" stroke-width=".55"/>
<text x="696.8" y="350.5" font-size="6.35" text-anchor="middle" fill="none" stroke="#fdfcf5" stroke-opacity=".85" stroke-width="1.1" stroke-linejoin="round">Rize</text>
<text x="696.8" y="350.5" font-size="6.35" text-anchor="middle" fill="#2a2a2a" stroke="#2a2a2a" stroke-width="0.14">Rize</text>
<circle cx="727.6" cy="320" r="1.2" fill="#fff" stroke="#666" stroke-width=".55"/>
<text x="728" y="316.9" font-size="6.35" text-anchor="middle" fill="none" stroke="#fdfcf5" stroke-opacity=".85" stroke-width="1.1" stroke-linejoin="round">Batumi</text>
<text x="728" y="316.9" font-size="6.35" text-anchor="middle" fill="#2a2a2a" stroke="#2a2a2a" stroke-width="0.14">Batumi</text>
<circle cx="767.9" cy="358.3" r="1.2" fill="#fff" stroke="#666" stroke-width=".55"/>
<text x="767.9" y="354.5" font-size="6.35" text-anchor="middle" fill="none" stroke="#fdfcf5" stroke-opacity=".85" stroke-width="1.1" stroke-linejoin="round">Kars</text>
<text x="767.9" y="354.5" font-size="6.35" text-anchor="middle" fill="#2a2a2a" stroke="#2a2a2a" stroke-width="0.14">Kars</text>
<circle cx="601.4" cy="389" r="1.2" fill="#fff" stroke="#666" stroke-width=".55"/>
<text x="600.8" y="385.3" font-size="6.35" text-anchor="middle" fill="none" stroke="#fdfcf5" stroke-opacity=".85" stroke-width="1.1" stroke-linejoin="round">Sivas</text>
<text x="600.8" y="385.3" font-size="6.35" text-anchor="middle" fill="#2a2a2a" stroke="#2a2a2a" stroke-width="0.14">Sivas</text>
<circle cx="669.3" cy="389.2" r="1.2" fill="#fff" stroke="#666" stroke-width=".55"/>
<text x="669.3" y="385.3" font-size="6.35" text-anchor="middle" fill="none" stroke="#fdfcf5" stroke-opacity=".85" stroke-width="1.1" stroke-linejoin="round">Erzincan</text>
<text x="669.3" y="385.3" font-size="6.35" text-anchor="middle" fill="#2a2a2a" stroke="#2a2a2a" stroke-width="0.14">Erzincan</text>
<circle cx="717.9" cy="383.3" r="1.2" fill="#fff" stroke="#666" stroke-width=".55"/>
<text x="717.9" y="379.9" font-size="6.35" text-anchor="middle" fill="none" stroke="#fdfcf5" stroke-opacity=".85" stroke-width="1.1" stroke-linejoin="round">Erzurum</text>
<text x="717.9" y="379.9" font-size="6.35" text-anchor="middle" fill="#2a2a2a" stroke="#2a2a2a" stroke-width="0.14">Erzurum</text>
<circle cx="766.6" cy="390.6" r="1.2" fill="#fff" stroke="#666" stroke-width=".55"/>
<text x="766.2" y="386.9" font-size="6.35" text-anchor="middle" fill="none" stroke="#fdfcf5" stroke-opacity=".85" stroke-width="1.1" stroke-linejoin="round">Ağrı</text>
<text x="766.2" y="386.9" font-size="6.35" text-anchor="middle" fill="#2a2a2a" stroke="#2a2a2a" stroke-width="0.14">Ağrı</text>
<circle cx="662.1" cy="427" r="1.2" fill="#fff" stroke="#666" stroke-width=".55"/>
<text x="662.1" y="423.4" font-size="6.35" text-anchor="middle" fill="none" stroke="#fdfcf5" stroke-opacity=".85" stroke-width="1.1" stroke-linejoin="round">Elazığ</text>
<text x="662.1" y="423.4" font-size="6.35" text-anchor="middle" fill="#2a2a2a" stroke="#2a2a2a" stroke-width="0.14">Elazığ</text>
<text x="637" y="433.5" font-size="6.35" text-anchor="middle" fill="none" stroke="#fdfcf5" stroke-opacity=".85" stroke-width="1.1" stroke-linejoin="round">Malatya</text>
<text x="637" y="433.5" font-size="6.35" text-anchor="middle" fill="#2a2a2a" stroke="#2a2a2a" stroke-width="0.14">Malatya</text>
<text x="769.5" y="318.1" font-size="5.8" text-anchor="middle" fill="#4d8fe0" transform="rotate(-52 769.5 316)" font-style="italic">Kür</text>
<text x="815.5" y="314.9" font-size="7.6" text-anchor="middle" fill="none" stroke="#fdfcf5" stroke-opacity=".85" stroke-width="1.1" stroke-linejoin="round">Tbilisi</text>
<text x="815.5" y="314.9" font-size="7.6" text-anchor="middle" fill="#1e1e1e" stroke="#1e1e1e" stroke-width="0.2">Tbilisi</text>
<circle cx="788.3" cy="351.8" r="1.2" fill="#fff" stroke="#666" stroke-width=".55"/>
<text x="791" y="354.3" font-size="6.35" text-anchor="start" fill="none" stroke="#fdfcf5" stroke-opacity=".85" stroke-width="1.1" stroke-linejoin="round">Gyumri</text>
<text x="791" y="354.3" font-size="6.35" text-anchor="start" fill="#2a2a2a" stroke="#2a2a2a" stroke-width="0.14">Gyumri</text>
<circle cx="806.2" cy="373.6" r="1.45" fill="#fff" stroke="#555" stroke-width=".55"/><circle cx="806.2" cy="373.6" r=".6" fill="#555"/>
<text x="806.2" y="369.5" font-size="7.7" text-anchor="middle" fill="none" stroke="#fdfcf5" stroke-opacity=".85" stroke-width="1.1" stroke-linejoin="round">Yerevan</text>
<text x="806.2" y="369.5" font-size="7.7" text-anchor="middle" fill="#1e1e1e" stroke="#1e1e1e" stroke-width="0.2">Yerevan</text>
<circle cx="793.6" cy="382.4" r="1.2" fill="#fff" stroke="#666" stroke-width=".55"/>
<text x="793.5" y="390.5" font-size="6.35" text-anchor="middle" fill="none" stroke="#fdfcf5" stroke-opacity=".85" stroke-width="1.1" stroke-linejoin="round">Iğdır</text>
<text x="793.5" y="390.5" font-size="6.35" text-anchor="middle" fill="#2a2a2a" stroke="#2a2a2a" stroke-width="0.14">Iğdır</text>
<circle cx="830.7" cy="407.6" r="1.2" fill="#fff" stroke="#666" stroke-width=".55"/>
<text x="834" y="409.9" font-size="6.35" text-anchor="start" fill="none" stroke="#fdfcf5" stroke-opacity=".85" stroke-width="1.1" stroke-linejoin="round">Naxçıvan</text>
<text x="834" y="409.9" font-size="6.35" text-anchor="start" fill="#2a2a2a" stroke="#2a2a2a" stroke-width="0.14">Naxçıvan</text>
<circle cx="818.5" cy="430.7" r="1.2" fill="#fff" stroke="#666" stroke-width=".55"/>
<text x="818.5" y="427.6" font-size="6.35" text-anchor="middle" fill="none" stroke="#fdfcf5" stroke-opacity=".85" stroke-width="1.1" stroke-linejoin="round">Khoy</text>
<text x="818.5" y="427.6" font-size="6.35" text-anchor="middle" fill="#2a2a2a" stroke="#2a2a2a" stroke-width="0.14">Khoy</text>
<circle cx="856.7" cy="355.5" r="1.2" fill="#fff" stroke="#666" stroke-width=".55"/>
<text x="856.7" y="352.3" font-size="6.35" text-anchor="middle" fill="none" stroke="#fdfcf5" stroke-opacity=".85" stroke-width="1.1" stroke-linejoin="round">Gəncə</text>
<text x="856.7" y="352.3" font-size="6.35" text-anchor="middle" fill="#2a2a2a" stroke="#2a2a2a" stroke-width="0.14">Gəncə</text>
<circle cx="879" cy="336.8" r="1.2" fill="#fff" stroke="#666" stroke-width=".55"/>
<text x="879.6" y="344.0" font-size="6.2" text-anchor="middle" fill="none" stroke="#fdfcf5" stroke-opacity=".85" stroke-width="1.1" stroke-linejoin="round">Şəki</text>
<text x="879.6" y="344.0" font-size="6.2" text-anchor="middle" fill="#555" stroke="#555" stroke-width="0.1">Şəki</text>
<circle cx="952.6" cy="366.4" r="1.45" fill="#fff" stroke="#555" stroke-width=".55"/><circle cx="952.6" cy="366.4" r=".6" fill="#555"/>
<text x="952.2" y="362.9" font-size="7.5" text-anchor="middle" fill="none" stroke="#fdfcf5" stroke-opacity=".85" stroke-width="1.1" stroke-linejoin="round">Bakı</text>
<text x="952.2" y="362.9" font-size="7.5" text-anchor="middle" fill="#1e1e1e" stroke="#1e1e1e" stroke-width="0.2">Bakı</text>
<text x="970.2" y="316.0" font-size="7.8" text-anchor="middle" fill="#4d8fe0">Caspian</text>
<text x="775.6" y="428.9" font-size="6.35" text-anchor="middle" fill="none" stroke="#fdfcf5" stroke-opacity=".85" stroke-width="1.1" stroke-linejoin="round">Van</text>
<text x="775.6" y="428.9" font-size="6.35" text-anchor="middle" fill="#2a2a2a" stroke="#2a2a2a" stroke-width="0.14">Van</text>
<path d="M562.8 342.8 L576 332 L570 331 Z" fill="rgba(0,0,0,.30)"/>
<path d="M564.2 333.8 L562.6 342.7 L568.9 331.2 Z" fill="#1e88f0"/>
<circle cx="564" cy="328" r="5.45" fill="#fff" stroke="#1e88f0" stroke-width="1.6"/>
</svg>

   <div class="mc" style="left:7px;top:6.8px;width:16.4px;height:16px"><svg viewBox="0 0 16 16" width="16.4" height="16"><path d="M11.7 4.1 4.3 7.7l3.5.6.5 3.6z" fill="#111"/></svg></div>
   <div class="mc" style="left:29px;top:6.5px;width:162.6px;height:17px;border-radius:1.6px 0 0 1.6px"><span style="position:absolute;left:6.6px;top:0;line-height:17.2px;font-size:7.7px;color:#999">Adres ya da yer</span></div>
   <div class="mc" style="left:191.5px;top:6.5px;width:27px;height:17px;background:#ffdb4d;border-radius:0 1.6px 1.6px 0;text-align:center;line-height:17.2px;font-size:7.7px;color:#000">Bul</div>
   <div class="mc" style="left:666.2px;top:7.1px;width:73.2px;height:15.9px"><svg style="position:absolute;left:4.6px;top:3.7px" width="8.6" height="8.6" viewBox="0 0 10 10"><circle cx="5" cy="5" r="4.6" fill="#9a9a9a"/><path d="M5 5 L5 .4 A4.6 4.6 0 0 1 9.6 5Z" fill="#c9c9c9"/><path d="M5 5 L.4 5 A4.6 4.6 0 0 1 5 .4Z" fill="#b2b2b2"/></svg><span style="position:absolute;left:18.2px;top:0;line-height:16px;font-size:7.7px">Trafik durumu</span></div>
   <div class="mc" style="left:745.2px;top:7.1px;width:69px;height:15.9px"><svg style="position:absolute;left:4.2px;top:3px" width="10.5" height="10" viewBox="0 0 21 20"><g fill="none" stroke="#444" stroke-width="1.6" stroke-linejoin="round"><path d="M10.5 2 19 6.2 10.5 10.4 2 6.2z" fill="#ddd"/><path d="M2 9.6 10.5 13.8 19 9.6M2 13 10.5 17.2 19 13"/></g></svg><span style="position:absolute;left:18.6px;top:0;line-height:16px;font-size:7.7px">Katmanlar</span><svg style="position:absolute;left:56.5px;top:5.6px" width="7" height="4.4" viewBox="0 0 14 9"><path d="M1.5 1.5 7 7 12.5 1.5" fill="none" stroke="#333" stroke-width="1.7"/></svg></div>
   <div class="mc" style="left:819.6px;top:7.1px;width:16.8px;height:15.9px"><svg viewBox="0 0 17 16" width="16.8" height="15.9"><g fill="#111"><path d="M12.3 4.2v3.3L9 4.2z M4.7 11.8V8.5L8 11.8z"/></g><path d="M11.3 5.2 5.7 10.8" stroke="#111" stroke-width="1.1"/></svg></div>
   <div class="mc" style="left:819.6px;top:85.9px;width:16.8px;height:16.8px"><svg viewBox="0 0 17 17" width="16.8" height="16.8"><rect x="3" y="6.3" width="11" height="4.2" rx=".8" fill="#fff" stroke="#333" stroke-width=".9"/><path d="M5 6.5v2M6.7 6.5v2M8.5 6.5v2M10.3 6.5v2M12 6.5v2" stroke="#333" stroke-width=".6"/></svg></div>
   <div style="position:absolute;left:777.3px;top:91.4px;font-size:6.8px;line-height:8px;color:#000;white-space:nowrap;background:rgba(255,255,255,.5);padding:0 .6px;border-radius:1px"><svg width="3.4" height="5" viewBox="0 0 3.4 5" style="vertical-align:-.5px;margin-right:1.7px"><path d="M.5 0V5M.5 2.5H3.4" stroke="#000" stroke-width=".9" fill="none"/></svg>100 km<svg width="3.4" height="5" viewBox="0 0 3.4 5" style="vertical-align:-.5px;margin-left:1.7px"><path d="M2.9 0V5M2.9 2.5H0" stroke="#000" stroke-width=".9" fill="none"/></svg></div>
   <div style="position:absolute;left:733.6px;top:107.1px;font-size:7.4px;line-height:9px;color:#000;white-space:nowrap"><span style="padding:0 1px">© Yandex</span> <span style="background:rgba(255,255,255,.75);text-decoration:underline;text-decoration-thickness:.5px;text-underline-offset:.9px;text-decoration-color:#444;padding:0 .6px">Kullanıcı Sözleşmesi</span></div>
   <div class="mc" style="left:6.3px;top:64.9px;width:16.9px;height:17.2px"><svg viewBox="0 0 17 17" width="16.9" height="17.2"><path d="M8.5 4.1v9M4 8.6h9" stroke="#111" stroke-width="2" fill="none"/></svg></div>
   <div class="mc" style="left:6.3px;top:85.5px;width:16.9px;height:16.5px"><svg viewBox="0 0 17 17" width="16.9" height="16.5"><path d="M4 8.3h9" stroke="#111" stroke-width="2" fill="none"/></svg></div>
   <div class="mc" style="left:5.2px;top:100.8px;width:55.5px;height:14.8px"><svg style="position:absolute;left:3.6px;top:2.4px" width="7.6" height="10" viewBox="0 0 15 20"><circle cx="7.5" cy="7" r="4.8" fill="#fff" stroke="#f00" stroke-width="3.2"/><path d="M5.2 12.5 7.2 19.5 10.8 12.2Z" fill="#f00"/></svg><span style="position:absolute;left:14.3px;top:0;line-height:15px;font-size:7.7px">Nasıl gidilir</span></div>
  </div>
 </div>

 <div class="panel" style="top:440.2px;height:151.4px">
  <div class="ph1"><b>İş Kalemleri</b><div class="btn" style="left:791.4px;top:2.7px;width:59.3px;height:16.8px;line-height:15.2px">++ Yeni Ekle ++</div></div>
  <div class="it" style="top:22.3px">
   <div class="c1"><div style="position:absolute;left:0;right:0;top:21.5px;line-height:8px">07 Nisan 2020 Salı</div><div style="position:absolute;left:0;right:0;top:33.5px;line-height:8px">0 : 0</div></div>
   <div class="c2"><div class="tt">Dış Bölge Bakı Onarım İşleri</div><div class="ds">Acente Bahçesinde Bakı Onarım İşleri, Bayrak Direkleri dikilecek ve Boyama yapılacak</div></div>
   <div class="c3"><div style="position:absolute;left:0;right:0;top:21.7px;line-height:8px">Personel (1 )</div><div style="position:absolute;left:0;right:0;top:33.2px;line-height:8px">Teknisyen Raporları</div></div>
   <div class="ab b" style="top:2.5px">Düzenle</div><div class="ab g" style="top:21.8px">Devam Ediyor</div><div class="ab b" style="top:41.2px">İndir</div>
  </div>
  <div class="it alt" style="top:86.2px">
   <div class="c1"><div style="position:absolute;left:0;right:0;top:21.5px;line-height:8px">16 Nisan 2020 Perşembe</div><div style="position:absolute;left:0;right:0;top:33.5px;line-height:8px">0 : 0</div></div>
   <div class="c2"><div class="tt">İç Bölge Tadilat İşleri</div><div class="ds">Elektirik sistemi oluşturulacak</div></div>
   <div class="c3"><div style="position:absolute;left:0;right:0;top:21.7px;line-height:8px">Personel (0 )</div><div style="position:absolute;left:0;right:0;top:33.2px;line-height:8px">Teknisyen Raporları</div></div>
   <div class="ab b" style="top:2.5px">Düzenle</div><div class="ab g" style="top:21.8px">Devam Ediyor</div><div class="ab b" style="top:41.2px">İndir</div>
  </div>
 </div>
</div>
</body>
</html>
